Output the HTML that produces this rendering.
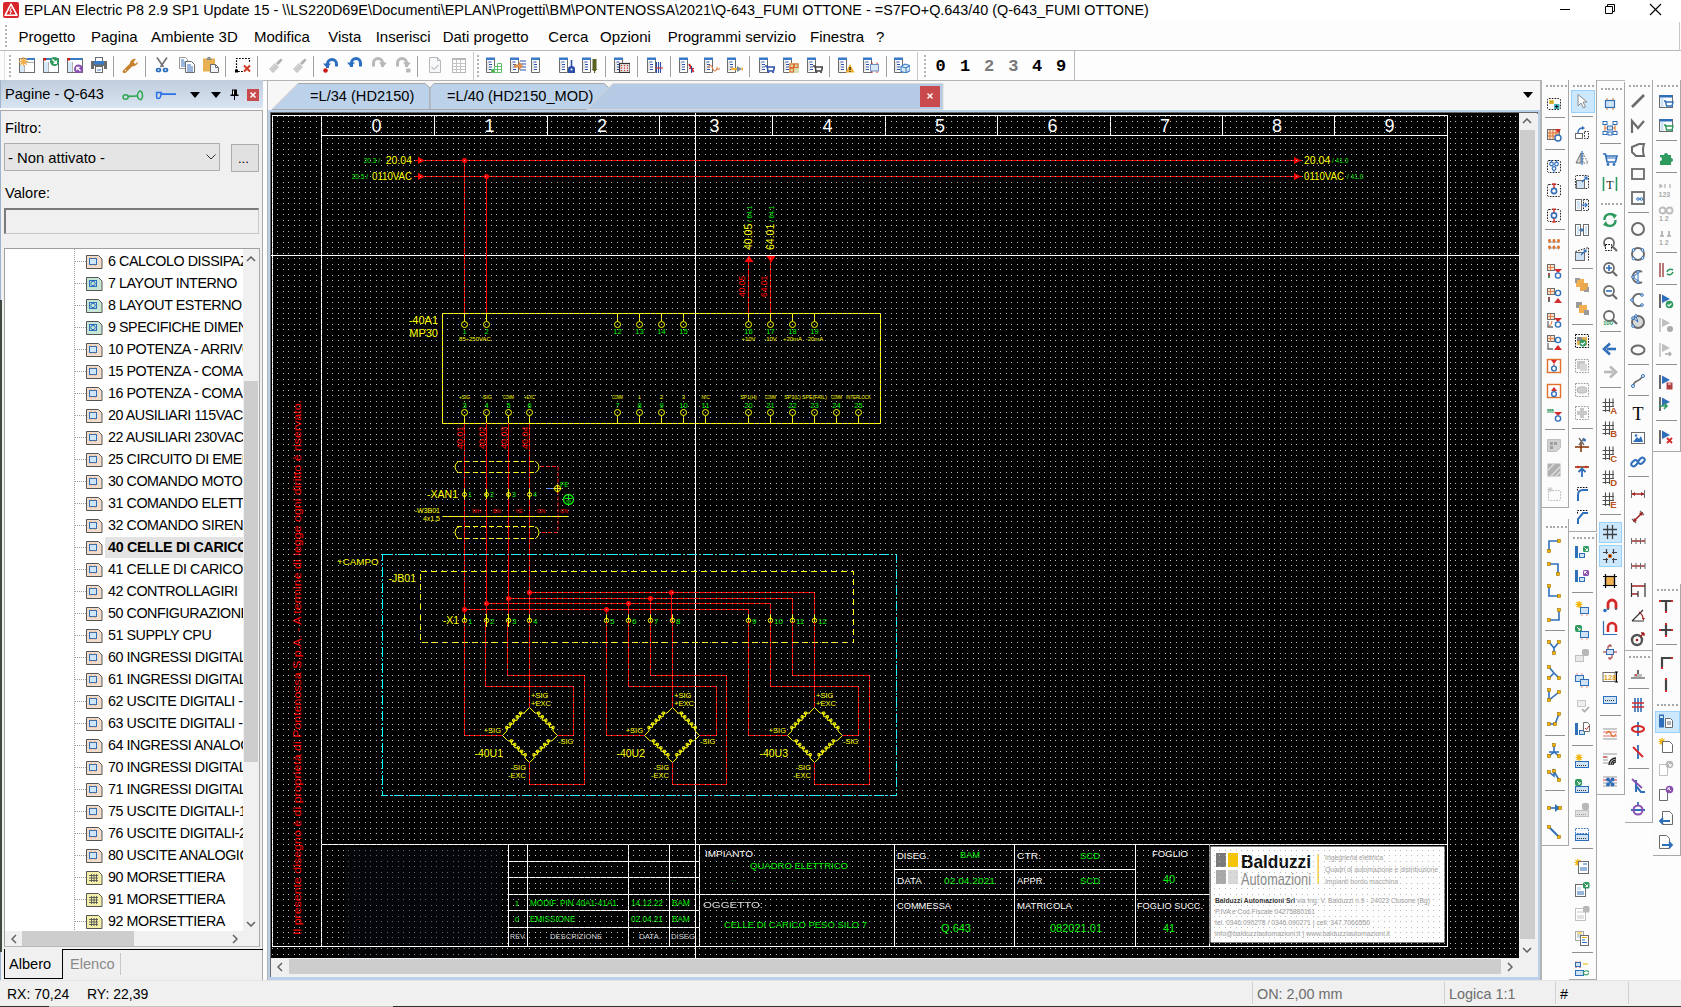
<!DOCTYPE html>
<html><head><meta charset="utf-8">
<style>
*{box-sizing:border-box;margin:0;padding:0}
html,body{width:1681px;height:1007px;overflow:hidden;background:#f0f0f0;font-family:"Liberation Sans",sans-serif;color:#000;position:relative}
.a{position:absolute}
.t{position:absolute;white-space:nowrap;line-height:1}
svg{overflow:hidden}
</style></head><body>
<div class="a" style="left:0;top:0;width:1681px;height:22px;background:#fff"></div>
<svg class="a" style="left:3px;top:2px" width="16" height="16" viewBox="0 0 16 16"><rect x="0" y="0" width="16" height="16" rx="2" fill="#d9262c"/><path d="M8 2.2 L14 13.3 L2 13.3 Z" fill="none" stroke="#fff" stroke-width="1.6" stroke-linejoin="round"/><path d="M8.6 5.5 L6.8 9 L8.6 9 L7.2 12" fill="none" stroke="#fff" stroke-width="1"/></svg>
<div class="t" style="left:24px;top:3px;font-size:14.4px">EPLAN Electric P8 2.9 SP1 Update 15 - \\LS220D69E\Documenti\EPLAN\Progetti\BM\PONTENOSSA\2021\Q-643_FUMI OTTONE - =S7FO+Q.643/40 (Q-643_FUMI OTTONE)</div>
<div class="a" style="left:1560px;top:9px;width:10px;height:1px;background:#000"></div>
<svg class="a" style="left:1604px;top:3px" width="12" height="12" viewBox="0 0 12 12"><path d="M1.5 3.5 H8.5 V10.5 H1.5 Z M3.5 3.5 V1.5 H10.5 V8.5 H8.5" fill="none" stroke="#000" stroke-width="1"/></svg>
<svg class="a" style="left:1649px;top:3px" width="13" height="13" viewBox="0 0 13 13"><path d="M1 1 L12 12 M12 1 L1 12" stroke="#000" stroke-width="1.1"/></svg>
<div class="a" style="left:0;top:22px;width:1681px;height:29px;background:#fdfdfd;border-bottom:1px solid #b9b9b9"></div>
<div class="a" style="left:1679px;top:22px;width:1px;height:29px;background:#c8c8c8"></div>
<div class="a" style="left:5px;top:25px;width:2px;height:2px;background:#b4b4b4"></div><div class="a" style="left:5px;top:29px;width:2px;height:2px;background:#b4b4b4"></div><div class="a" style="left:5px;top:33px;width:2px;height:2px;background:#b4b4b4"></div><div class="a" style="left:5px;top:37px;width:2px;height:2px;background:#b4b4b4"></div><div class="a" style="left:5px;top:41px;width:2px;height:2px;background:#b4b4b4"></div><div class="a" style="left:5px;top:45px;width:2px;height:2px;background:#b4b4b4"></div>
<div class="t" style="left:18.6px;top:29px;font-size:15px">Progetto</div>
<div class="t" style="left:91px;top:29px;font-size:15px">Pagina</div>
<div class="t" style="left:151px;top:29px;font-size:15px">Ambiente 3D</div>
<div class="t" style="left:254px;top:29px;font-size:15px">Modifica</div>
<div class="t" style="left:328.3px;top:29px;font-size:15px">Vista</div>
<div class="t" style="left:375.7px;top:29px;font-size:15px">Inserisci</div>
<div class="t" style="left:442.7px;top:29px;font-size:15px">Dati progetto</div>
<div class="t" style="left:548.3px;top:29px;font-size:15px">Cerca</div>
<div class="t" style="left:600px;top:29px;font-size:15px">Opzioni</div>
<div class="t" style="left:667.7px;top:29px;font-size:15px">Programmi servizio</div>
<div class="t" style="left:810px;top:29px;font-size:15px">Finestra</div>
<div class="t" style="left:876px;top:29px;font-size:15px">?</div>
<div class="a" style="left:0;top:51px;width:1681px;height:30px;background:#fdfdfd;border-bottom:1px solid #b9b9b9"></div>
<div class="a" style="left:4px;top:51px;width:1px;height:29px;background:#e0e0e0"></div>
<div class="a" style="left:9px;top:55px;width:2px;height:2px;background:#b4b4b4"></div><div class="a" style="left:9px;top:59px;width:2px;height:2px;background:#b4b4b4"></div><div class="a" style="left:9px;top:63px;width:2px;height:2px;background:#b4b4b4"></div><div class="a" style="left:9px;top:67px;width:2px;height:2px;background:#b4b4b4"></div><div class="a" style="left:9px;top:71px;width:2px;height:2px;background:#b4b4b4"></div><div class="a" style="left:9px;top:75px;width:2px;height:2px;background:#b4b4b4"></div>
<svg class="a" style="left:19px;top:57px" width="16" height="16" viewBox="0 0 16 16"><rect x="0.5" y="1.5" width="15" height="14" fill="#fff" stroke="#6b6b6b"/><rect x="7" y="1" width="9" height="2" fill="#3a7bc8"/><rect x="1" y="8" width="4" height="7" fill="#d4e8f8"/><path d="M5.5 8V15M5.5 5.5H15" stroke="#9a9a9a" stroke-width=".8"/><path d="M0.00 4.50L9.00 4.50M1.32 1.32L7.68 7.68M4.50 0.00L4.50 9.00M7.68 1.32L1.32 7.68" stroke="#f0b050" stroke-width="1.3"/><circle cx="4.5" cy="4.5" r="1.6" fill="#f0b050"/></svg>
<svg class="a" style="left:43px;top:57px" width="16" height="16" viewBox="0 0 16 16"><rect x="0.5" y="1.5" width="15" height="14" fill="#fff" stroke="#6b6b6b"/><rect x="1" y="1" width="14" height="2" fill="#3a7bc8"/><rect x="0.5" y="1" width="2.5" height="2.5" fill="#e01010"/><rect x="1" y="5" width="4" height="10" fill="#d4e8f8"/><path d="M5.5 5V15" stroke="#9a9a9a" stroke-width=".8"/><circle cx="11.5" cy="4.5" r="4.5" fill="#2e9a5e"/><path d="M9.3 2.3L13 6M13.3 3.5V6.3H10.5" stroke="#fff" stroke-width="1.3" fill="none"/></svg>
<svg class="a" style="left:67px;top:57px" width="16" height="16" viewBox="0 0 16 16"><rect x="0.5" y="1.5" width="15" height="14" fill="#fff" stroke="#6b6b6b"/><rect x="1" y="1" width="14" height="2" fill="#3a7bc8"/><rect x="0.5" y="1" width="2.5" height="2.5" fill="#e01010"/><rect x="1" y="5" width="4" height="10" fill="#d4e8f8"/><path d="M5.5 5V15" stroke="#9a9a9a" stroke-width=".8"/><circle cx="11.5" cy="12" r="4.5" fill="#8a4fb0"/><path d="M13.5 14L10 10.5M9.8 13.2V10.3H12.7" stroke="#fff" stroke-width="1.3" fill="none"/></svg>
<svg class="a" style="left:91px;top:57px" width="16" height="16" viewBox="0 0 16 16"><rect x="4.5" y="0.5" width="7" height="4" fill="#fff" stroke="#6b6b6b"/><path d="M0 4h16v8h-3v-3h-10v3h-3z" fill="#6b6b6b"/><rect x="3" y="4" width="10" height="3.5" fill="#3a7bc8"/><rect x="4.5" y="9.5" width="7" height="6" fill="#fff" stroke="#6b6b6b"/><path d="M6 13h4" stroke="#3a7bc8"/></svg>
<svg class="a" style="left:122px;top:57px" width="16" height="16" viewBox="0 0 16 16"><path d="M2.5 14.5L9.5 7.5" stroke="#c8822e" stroke-width="3.6" stroke-linecap="round"/><path d="M8 8 A5 5 0 0 1 14 2 L11.5 5 L13 7 L16 4.5 A5 5 0 0 1 9.5 9Z" fill="#c8822e"/><circle cx="3.5" cy="13.5" r=".7" fill="#fff"/></svg>
<svg class="a" style="left:154px;top:57px" width="16" height="16" viewBox="0 0 16 16"><path d="M3 0.5L9.5 10M13 0.5L6.5 10" stroke="#707070" stroke-width="1.6"/><ellipse cx="4.5" cy="13" rx="2.8" ry="2.3" fill="#2a6fc0"/><ellipse cx="11.5" cy="13" rx="2.8" ry="2.3" fill="#2a6fc0"/><ellipse cx="4.5" cy="13" rx="1" ry=".8" fill="#fff"/><ellipse cx="11.5" cy="13" rx="1" ry=".8" fill="#fff"/></svg>
<svg class="a" style="left:179px;top:57px" width="16" height="16" viewBox="0 0 16 16"><path d="M0.5 0.5h6l2 2v9h-8z" fill="#fff" stroke="#9a9a9a"/><path d="M2 3h3M2 5h4M2 7h4M2 9h4" stroke="#3a6fb8"/><path d="M6.5 4.5h6l3 3v8h-9z" fill="#fff" stroke="#6b6b6b"/><path d="M8 8h4M8 10h6M8 12h6M8 14h6" stroke="#3a6fb8"/></svg>
<svg class="a" style="left:203px;top:57px" width="16" height="16" viewBox="0 0 16 16"><rect x="0" y="1.5" width="12" height="13" fill="#e8b050"/><path d="M3.5 1.5h5v1.5h-5z" fill="#888"/><rect x="4.5" y="0" width="3" height="1.5" fill="#888"/><path d="M7.5 7.5h5l3 3v5h-8z" fill="#f0f4fa" stroke="#6b6b6b"/><path d="M12.5 7.5v3h3" fill="none" stroke="#6b6b6b"/></svg>
<svg class="a" style="left:235px;top:57px" width="16" height="16" viewBox="0 0 16 16"><path d="M1.5 14V1.5H14.5V6" fill="none" stroke="#000" stroke-width="1.2" stroke-dasharray="1.8 1.2"/><path d="M3 14.5H8" stroke="#000" stroke-width="1.2" stroke-dasharray="1.8 1.2"/><rect x="0" y="12.5" width="3" height="3" fill="#000"/><path d="M9 8.5l6 6M15 8.5l-6 6" stroke="#d03a20" stroke-width="2"/></svg>
<svg class="a" style="left:267px;top:57px" width="16" height="16" viewBox="0 0 16 16"><path d="M2 12L8 6L12 10L6 16Z" fill="#c4c4c4"/><path d="M3 13L9 7M5 14.5L10.5 9" stroke="#e4e4e4" stroke-width=".8"/><path d="M9 6L12 3L14 1.5L15.5 3L14 5L11 8Z" fill="#b0b0b0"/></svg>
<svg class="a" style="left:291px;top:57px" width="16" height="16" viewBox="0 0 16 16"><path d="M2 12L8 6L12 10L6 16Z" fill="#c4c4c4"/><path d="M3 13L9 7M5 14.5L10.5 9" stroke="#e4e4e4" stroke-width=".8"/><path d="M9 6L12 3L14 1.5L15.5 3L14 5L11 8Z" fill="#b0b0b0"/></svg>
<svg class="a" style="left:323px;top:57px" width="16" height="16" viewBox="0 0 16 16"><path d="M4.5 11V7A4.5 4.5 0 0 1 13.5 7V9.5" fill="none" stroke="#2a6fc0" stroke-width="3"/><path d="M0 6.5L8 6.5L4 11Z" fill="#2a6fc0"/><circle cx="2.5" cy="13.5" r="2.3" fill="#c81818"/></svg>
<svg class="a" style="left:347px;top:57px" width="16" height="16" viewBox="0 0 16 16"><path d="M4.5 10V6A4.5 4.5 0 0 1 13.5 6V9.5" fill="none" stroke="#2a6fc0" stroke-width="3"/><path d="M0 5.5L8 5.5L4 10Z" fill="#2a6fc0"/></svg>
<svg class="a" style="left:371px;top:57px" width="16" height="16" viewBox="0 0 16 16"><path d="M11.5 10V6A4.5 4.5 0 0 0 2.5 6V9.5" fill="none" stroke="#b8b8b8" stroke-width="3"/><path d="M16 5.5L8 5.5L12 10Z" fill="#b8b8b8"/></svg>
<svg class="a" style="left:395px;top:57px" width="16" height="16" viewBox="0 0 16 16"><path d="M11.5 10V6A4.5 4.5 0 0 0 2.5 6V9.5" fill="none" stroke="#b8b8b8" stroke-width="3"/><path d="M16 5.5L8 5.5L12 10Z" fill="#b8b8b8"/><rect x="11" y="11.5" width="4.5" height="4" rx="1" fill="#b8b8b8"/></svg>
<svg class="a" style="left:427px;top:57px" width="16" height="16" viewBox="0 0 16 16"><path d="M2.5 0.5h8l3 3v12h-11z" fill="#f6f8fa" stroke="#b8b8b8"/><path d="M10.5 0.5v3h3" fill="none" stroke="#b8b8b8"/><path d="M4.5 10l2.5 2.5 4.5-4.5" stroke="#c0c0c0" stroke-width="1.2" fill="none"/></svg>
<svg class="a" style="left:451px;top:57px" width="16" height="16" viewBox="0 0 16 16"><rect x="1.5" y="1.5" width="13" height="14" fill="#fff" stroke="#b8b8b8"/><rect x="1" y="1" width="14" height="2" fill="#b8b8b8"/><path d="M1.5 6.5h13M1.5 9.5h13M1.5 12.5h13M5.5 3v12M9.5 3v12" stroke="#c4c4c4"/></svg>
<svg class="a" style="left:486px;top:57px" width="16" height="16" viewBox="0 0 16 16"><path d="M0.5 2V15.5H8.5V2" fill="#fff" stroke="#6b6b6b"/><rect x="0" y="0.5" width="9" height="2.5" fill="#3a7bc8"/><path d="M2 4.5V14" stroke="#b0b0b0" stroke-width=".7"/><path d="M2.5 5h3M3 7.5h3M3 10h3M3 12.5h3" stroke="#2a4fa8" stroke-width="1"/><path d="M5.5 15.5V12.5H8.5V9.5H11.5V6.5H15.5V15.5Z" fill="#fff" stroke="#60c070"/><path d="M8.5 12.5H15.5M11.5 9.5H15.5M11.5 9.5V15.5M8.5 12.5V15.5" stroke="#60c070"/><rect x="6" y="13" width="2" height="2" fill="#50b050"/></svg>
<svg class="a" style="left:510px;top:57px" width="16" height="16" viewBox="0 0 16 16"><path d="M0.5 2V15.5H8.5V2" fill="#fff" stroke="#6b6b6b"/><rect x="0" y="0.5" width="9" height="2.5" fill="#3a7bc8"/><path d="M2 4.5V14" stroke="#b0b0b0" stroke-width=".7"/><path d="M2.5 5h3M3 7.5h3M3 10h3M3 12.5h3" stroke="#2a4fa8" stroke-width="1"/><path d="M10 4h6M10 7h6M10 10h6M10 13h6" stroke="#2a4fa8" stroke-width="1.1"/><path d="M4 7.5h5v-3l4 4.5-4 4.5v-3h-5z" fill="#e0904a"/></svg>
<svg class="a" style="left:531px;top:57px" width="16" height="16" viewBox="0 0 16 16"><path d="M0.5 2V15.5H8.5V2" fill="#fff" stroke="#6b6b6b"/><rect x="0" y="0.5" width="9" height="2.5" fill="#3a7bc8"/><path d="M2 4.5V14" stroke="#b0b0b0" stroke-width=".7"/><path d="M2.5 5h3M3 7.5h3M3 10h3M3 12.5h3" stroke="#2a4fa8" stroke-width="1"/></svg>
<svg class="a" style="left:559px;top:57px" width="16" height="16" viewBox="0 0 16 16"><path d="M0.5 2V15.5H8.5V2" fill="#fff" stroke="#6b6b6b"/><rect x="0" y="0.5" width="9" height="2.5" fill="#3a7bc8"/><path d="M2 4.5V14" stroke="#b0b0b0" stroke-width=".7"/><path d="M2.5 5h3M3 7.5h3M3 10h3M3 12.5h3" stroke="#2a4fa8" stroke-width="1"/><path d="M12.5 3V10" stroke="#2a4fa8" stroke-width="1.6"/><path d="M9 16V11.5Q9 9 12.5 9Q16 9 16 11.5V16Z" fill="#2a4fa8"/><circle cx="12.5" cy="12.5" r="1" fill="#fff"/></svg>
<svg class="a" style="left:582px;top:57px" width="16" height="16" viewBox="0 0 16 16"><path d="M0.5 2V15.5H8.5V2" fill="#fff" stroke="#6b6b6b"/><rect x="0" y="0.5" width="9" height="2.5" fill="#3a7bc8"/><path d="M2 4.5V14" stroke="#b0b0b0" stroke-width=".7"/><path d="M2.5 5h3M3 7.5h3M3 10h3M3 12.5h3" stroke="#2a4fa8" stroke-width="1"/><rect x="10.5" y="2" width="4" height="10" fill="#5a6020"/><path d="M9.5 12h6l-2 2h-2z" fill="#5a6020"/><rect x="12" y="13" width="1.2" height="3" fill="#5a6020"/></svg>
<svg class="a" style="left:614px;top:57px" width="16" height="16" viewBox="0 0 16 16"><path d="M0.5 2V15.5H8.5V2" fill="#fff" stroke="#6b6b6b"/><rect x="0" y="0.5" width="9" height="2.5" fill="#3a7bc8"/><path d="M2 4.5V14" stroke="#b0b0b0" stroke-width=".7"/><path d="M2.5 5h3M3 7.5h3M3 10h3M3 12.5h3" stroke="#2a4fa8" stroke-width="1"/><rect x="5.5" y="6.5" width="10.5" height="9" fill="#e8e8e8" stroke="#333" stroke-width="1.2"/><path d="M7.5 8v6M10.5 8v6M13.5 8v6" stroke="#d03030" stroke-width="1.2" stroke-dasharray="1.2 1.3"/></svg>
<svg class="a" style="left:647px;top:57px" width="16" height="16" viewBox="0 0 16 16"><path d="M0.5 2V15.5H8.5V2" fill="#fff" stroke="#6b6b6b"/><rect x="0" y="0.5" width="9" height="2.5" fill="#3a7bc8"/><path d="M2 4.5V14" stroke="#b0b0b0" stroke-width=".7"/><path d="M2.5 5h3M3 7.5h3M3 10h3M3 12.5h3" stroke="#2a4fa8" stroke-width="1"/><path d="M9.5 5V16M11.5 5V16M13.5 5V16" stroke="#2a4fa8" stroke-width="1.1"/><path d="M8 11H16" stroke="#d03030" stroke-width="1.1"/></svg>
<svg class="a" style="left:679px;top:57px" width="16" height="16" viewBox="0 0 16 16"><path d="M0.5 2V15.5H8.5V2" fill="#fff" stroke="#6b6b6b"/><rect x="0" y="0.5" width="9" height="2.5" fill="#3a7bc8"/><path d="M2 4.5V14" stroke="#b0b0b0" stroke-width=".7"/><path d="M2.5 5h3M3 7.5h3M3 10h3M3 12.5h3" stroke="#2a4fa8" stroke-width="1"/><path d="M10 7L14.5 15" stroke="#d02020" stroke-width="1.8"/><path d="M10 11.5h5" stroke="#d02020" stroke-width="1"/><path d="M12.5 9V16" stroke="#2a4fa8"/></svg>
<svg class="a" style="left:704px;top:57px" width="16" height="16" viewBox="0 0 16 16"><path d="M0.5 2V15.5H8.5V2" fill="#fff" stroke="#6b6b6b"/><rect x="0" y="0.5" width="9" height="2.5" fill="#3a7bc8"/><path d="M2 4.5V14" stroke="#b0b0b0" stroke-width=".7"/><path d="M2.5 5h3M3 7.5h3M3 10h3M3 12.5h3" stroke="#2a4fa8" stroke-width="1"/><path d="M4 11Q6 5 8.5 11T13 11Q14 14 16 11" fill="none" stroke="#e08a50" stroke-width="1.1"/></svg>
<svg class="a" style="left:727px;top:57px" width="16" height="16" viewBox="0 0 16 16"><path d="M0.5 2V15.5H8.5V2" fill="#fff" stroke="#6b6b6b"/><rect x="0" y="0.5" width="9" height="2.5" fill="#3a7bc8"/><path d="M2 4.5V14" stroke="#b0b0b0" stroke-width=".7"/><path d="M2.5 5h3M3 7.5h3M3 10h3M3 12.5h3" stroke="#2a4fa8" stroke-width="1"/><path d="M4 12h6" stroke="#f0b030" stroke-width="2.2"/><path d="M10 9l5 3-5 3z" fill="#7a8a9a"/><rect x="14.5" y="10.5" width="1.5" height="3" fill="#f0b030"/></svg>
<svg class="a" style="left:759px;top:57px" width="16" height="16" viewBox="0 0 16 16"><path d="M0.5 2V15.5H8.5V2" fill="#fff" stroke="#6b6b6b"/><rect x="0" y="0.5" width="9" height="2.5" fill="#3a7bc8"/><path d="M2 4.5V14" stroke="#b0b0b0" stroke-width=".7"/><path d="M2.5 5h3M3 7.5h3M3 10h3M3 12.5h3" stroke="#2a4fa8" stroke-width="1"/><path d="M6 9H8L9 14H14.5L15.5 10H8.5" fill="none" stroke="#2a4fa8" stroke-width="1.5"/><circle cx="9.5" cy="15.5" r=".9" fill="#2a4fa8"/><circle cx="14" cy="15.5" r=".9" fill="#2a4fa8"/></svg>
<svg class="a" style="left:783px;top:57px" width="16" height="16" viewBox="0 0 16 16"><path d="M0.5 2V15.5H8.5V2" fill="#fff" stroke="#6b6b6b"/><rect x="0" y="0.5" width="9" height="2.5" fill="#3a7bc8"/><path d="M2 4.5V14" stroke="#b0b0b0" stroke-width=".7"/><path d="M2.5 5h3M3 7.5h3M3 10h3M3 12.5h3" stroke="#2a4fa8" stroke-width="1"/><rect x="6" y="6" width="10" height="10" fill="#d8e0b8"/><rect x="7" y="7" width="3.5" height="3.5" fill="none" stroke="#e07030" stroke-width="1.2"/><rect x="11.5" y="7" width="3.5" height="3.5" fill="none" stroke="#e07030" stroke-width="1.2"/><rect x="7" y="11.5" width="3.5" height="3.5" fill="none" stroke="#e07030" stroke-width="1.2"/></svg>
<svg class="a" style="left:807px;top:57px" width="16" height="16" viewBox="0 0 16 16"><path d="M0.5 2V15.5H8.5V2" fill="#fff" stroke="#6b6b6b"/><rect x="0" y="0.5" width="9" height="2.5" fill="#3a7bc8"/><path d="M2 4.5V14" stroke="#b0b0b0" stroke-width=".7"/><path d="M2.5 5h3M3 7.5h3M3 10h3M3 12.5h3" stroke="#2a4fa8" stroke-width="1"/><path d="M6 9H8L9 14H14.5L15.5 10H8.5" fill="none" stroke="#404040" stroke-width="1.5"/><circle cx="9.5" cy="15.5" r=".9" fill="#404040"/><circle cx="14" cy="15.5" r=".9" fill="#404040"/></svg>
<svg class="a" style="left:838px;top:57px" width="16" height="16" viewBox="0 0 16 16"><path d="M0.5 2V15.5H8.5V2" fill="#fff" stroke="#6b6b6b"/><rect x="0" y="0.5" width="9" height="2.5" fill="#3a7bc8"/><path d="M2 4.5V14" stroke="#b0b0b0" stroke-width=".7"/><path d="M2.5 5h3M3 7.5h3M3 10h3M3 12.5h3" stroke="#2a4fa8" stroke-width="1"/><path d="M12 7L16.5 15.5H7.5Z" fill="#f0b030"/><path d="M12 10v3M12 14v1" stroke="#000" stroke-width="1.1"/></svg>
<svg class="a" style="left:863px;top:57px" width="16" height="16" viewBox="0 0 16 16"><path d="M0.5 2V15.5H8.5V2" fill="#fff" stroke="#6b6b6b"/><rect x="0" y="0.5" width="9" height="2.5" fill="#3a7bc8"/><path d="M2 4.5V14" stroke="#b0b0b0" stroke-width=".7"/><path d="M2.5 5h3M3 7.5h3M3 10h3M3 12.5h3" stroke="#2a4fa8" stroke-width="1"/><rect x="7.5" y="7.5" width="8" height="6.5" fill="#d8e8f8" stroke="#7090c0"/><path d="M9 5.5v1.5M14 5.5v1.5M9 14.5v1.5M14 14.5v1.5" stroke="#d02020"/></svg>
<svg class="a" style="left:894px;top:57px" width="16" height="16" viewBox="0 0 16 16"><path d="M0.5 2V15.5H8.5V2" fill="#fff" stroke="#6b6b6b"/><rect x="0" y="0.5" width="9" height="2.5" fill="#3a7bc8"/><path d="M2 4.5V14" stroke="#b0b0b0" stroke-width=".7"/><path d="M2.5 5h3M3 7.5h3M3 10h3M3 12.5h3" stroke="#2a4fa8" stroke-width="1"/><path d="M7 9.5l4-2.5 5 1.5v5l-4 2.5-5-1.5z" fill="#dceaf8" stroke="#3a7bc8" stroke-width="1.1"/><path d="M7 9.5l5 1.5 4-2.5M12 11v5" stroke="#3a7bc8" fill="none" stroke-width="1.1"/></svg>
<div class="a" style="left:113px;top:56px;width:1px;height:21px;background:#a0a0a0"></div>
<div class="a" style="left:145px;top:56px;width:1px;height:21px;background:#a0a0a0"></div>
<div class="a" style="left:225px;top:56px;width:1px;height:21px;background:#a0a0a0"></div>
<div class="a" style="left:257px;top:56px;width:1px;height:21px;background:#a0a0a0"></div>
<div class="a" style="left:313px;top:56px;width:1px;height:21px;background:#a0a0a0"></div>
<div class="a" style="left:417px;top:56px;width:1px;height:21px;background:#a0a0a0"></div>
<div class="a" style="left:605px;top:56px;width:1px;height:21px;background:#a0a0a0"></div>
<div class="a" style="left:637px;top:56px;width:1px;height:21px;background:#a0a0a0"></div>
<div class="a" style="left:670px;top:56px;width:1px;height:21px;background:#a0a0a0"></div>
<div class="a" style="left:749px;top:56px;width:1px;height:21px;background:#a0a0a0"></div>
<div class="a" style="left:829px;top:56px;width:1px;height:21px;background:#a0a0a0"></div>
<div class="a" style="left:886px;top:56px;width:1px;height:21px;background:#a0a0a0"></div>
<div class="a" style="left:473px;top:52px;width:1px;height:28px;background:#c8c8c8"></div>
<div class="a" style="left:477px;top:55px;width:2px;height:2px;background:#b4b4b4"></div><div class="a" style="left:477px;top:59px;width:2px;height:2px;background:#b4b4b4"></div><div class="a" style="left:477px;top:63px;width:2px;height:2px;background:#b4b4b4"></div><div class="a" style="left:477px;top:67px;width:2px;height:2px;background:#b4b4b4"></div><div class="a" style="left:477px;top:71px;width:2px;height:2px;background:#b4b4b4"></div><div class="a" style="left:477px;top:75px;width:2px;height:2px;background:#b4b4b4"></div>
<div class="a" style="left:917px;top:52px;width:1px;height:28px;background:#c8c8c8"></div>
<div class="a" style="left:924px;top:55px;width:2px;height:2px;background:#b4b4b4"></div><div class="a" style="left:924px;top:59px;width:2px;height:2px;background:#b4b4b4"></div><div class="a" style="left:924px;top:63px;width:2px;height:2px;background:#b4b4b4"></div><div class="a" style="left:924px;top:67px;width:2px;height:2px;background:#b4b4b4"></div><div class="a" style="left:924px;top:71px;width:2px;height:2px;background:#b4b4b4"></div><div class="a" style="left:924px;top:75px;width:2px;height:2px;background:#b4b4b4"></div>
<div class="t" style="left:934.6px;top:58px;font-size:17px;font-family:Liberation Mono,monospace;font-weight:bold;color:#000;width:12px;text-align:center">0</div>
<div class="t" style="left:959px;top:58px;font-size:17px;font-family:Liberation Mono,monospace;font-weight:bold;color:#000;width:12px;text-align:center">1</div>
<div class="t" style="left:983px;top:58px;font-size:17px;font-family:Liberation Mono,monospace;font-weight:bold;color:#7a7a7a;width:12px;text-align:center">2</div>
<div class="t" style="left:1007.3px;top:58px;font-size:17px;font-family:Liberation Mono,monospace;font-weight:bold;color:#7a7a7a;width:12px;text-align:center">3</div>
<div class="t" style="left:1031px;top:58px;font-size:17px;font-family:Liberation Mono,monospace;font-weight:bold;color:#000;width:12px;text-align:center">4</div>
<div class="t" style="left:1055px;top:58px;font-size:17px;font-family:Liberation Mono,monospace;font-weight:bold;color:#000;width:12px;text-align:center">9</div>
<div class="a" style="left:1074px;top:51px;width:1px;height:30px;background:#b9b9b9"></div>
<div class="a" style="left:0;top:81px;width:263px;height:899px;background:#f0f0f0"></div>
<div class="a" style="left:0;top:81px;width:1px;height:899px;background:#9fb4cc"></div>
<div class="a" style="left:0;top:300px;width:2px;height:652px;background:#404840"></div>
<div class="a" style="left:1px;top:80px;width:262px;height:28px;background:linear-gradient(#c0cddc,#d8e4f1)"></div>
<div class="a" style="left:0;top:108px;width:263px;height:2px;background:#fafafa"></div>
<div class="a" style="left:0;top:110px;width:263px;height:1px;background:#a8a8a8"></div>
<div class="a" style="left:262px;top:110px;width:1px;height:870px;background:#a8a8a8"></div>
<div class="t" style="left:5px;top:87px;font-size:14.6px">Pagine - Q-643</div>
<svg class="a" style="left:120px;top:88px" width="26" height="14" viewBox="0 0 26 14"><ellipse cx="5.6" cy="9" rx="2.6" ry="2.3" fill="none" stroke="#30a850" stroke-width="1.5"/><path d="M8 8.4L17.5 8" stroke="#30a850" stroke-width="1.6"/><path d="M17.3 8 Q18 3 20.5 3 Q22.8 4 22.5 9 Q21.5 12 20 11.6 Q18 11 17.3 8Z" fill="none" stroke="#30a850" stroke-width="1.5"/></svg>
<svg class="a" style="left:154px;top:88px" width="24" height="14" viewBox="0 0 24 14"><path d="M2.6 4.6H7.2L6.5 8.8Q5.8 10.6 4.2 10.6Q2.6 10.6 2.6 8.8Z" fill="none" stroke="#2a6fe8" stroke-width="1.5"/><path d="M7.5 6.2H21.3" stroke="#2a6fe8" stroke-width="1.8" stroke-linecap="round"/></svg>
<svg class="a" style="left:190px;top:92px" width="10" height="6" viewBox="0 0 10 6"><path d="M0 0h10L5 6z" fill="#000"/></svg>
<svg class="a" style="left:211px;top:92px" width="10" height="6" viewBox="0 0 10 6"><path d="M0 0h10L5 6z" fill="#000"/></svg>
<svg class="a" style="left:230px;top:89px" width="9" height="11" viewBox="0 0 9 11"><path d="M2 0.5h5v5h1.5v1.5h-8v-1.5h1.5z" fill="#000"/><rect x="3" y="1.5" width="1" height="4" fill="#fff"/><rect x="4" y="7" width="1" height="4" fill="#000"/></svg>
<div class="a" style="left:247px;top:89px;width:12px;height:12px;background:#c84a4d"></div>
<svg class="a" style="left:249px;top:91px" width="8" height="8" viewBox="0 0 8 8"><path d="M1.5 1.5l5 5M6.5 1.5l-5 5" stroke="#fff" stroke-width="1.5"/></svg>
<div class="t" style="left:5px;top:121px;font-size:14.6px">Filtro:</div>
<div class="a" style="left:4px;top:143px;width:216px;height:28px;background:#e5e5e5;border:1px solid #adadad"></div>
<div class="t" style="left:8px;top:151px;font-size:14.8px">- Non attivato -</div>
<svg class="a" style="left:206px;top:154px" width="10" height="6" viewBox="0 0 10 6"><path d="M0.5 0.5L5 5L9.5 0.5" fill="none" stroke="#333" stroke-width="1"/></svg>
<div class="a" style="left:231px;top:144px;width:28px;height:28px;background:#e1e1e1;border:1px solid #adadad"></div>
<div class="t" style="left:238px;top:152px;font-size:13px">...</div>
<div class="t" style="left:5px;top:186px;font-size:14.6px">Valore:</div>
<div class="a" style="left:4px;top:208px;width:255px;height:26px;background:#f0f0f0;border:2px solid #7a7a7a;border-right:1px solid #c8c8c8;border-bottom:1px solid #c8c8c8"></div>
<div class="a" style="left:4px;top:248px;width:256px;height:699px;background:#fff;border:1px solid #a0a0a0;border-right:2px solid #a8a8a8;border-bottom:2px solid #b8b8b8"></div>
<div class="a" style="left:5px;top:249px;width:238px;height:682px;overflow:hidden">
<div class="a" style="left:69px;top:0;width:1px;height:682px;background:repeating-linear-gradient(#a0a0a0 0 1px,transparent 1px 2px)"></div>
<div class="a" style="left:70px;top:12px;width:11px;height:1px;background:repeating-linear-gradient(90deg,#a0a0a0 0 1px,transparent 1px 2px)"></div>
<svg class="a" style="left:81px;top:6px" width="17" height="14" viewBox="0 0 17 14"><path d="M0.5 0.5h12l3.5 3.5v9.5h-15.5z" fill="#f2dccb" stroke="#555"/><rect x="3.5" y="3.5" width="7" height="6" fill="#cfe6f8" stroke="#2a6fc0"/><path d="M5 2.5v1M9 2.5v1M5 9.5v1M9 9.5v1" stroke="#e07020"/></svg>
<div class="t" style="left:103px;top:5px;font-size:14.3px;letter-spacing:-0.45px">6 CALCOLO DISSIPAZIONE</div>
<div class="a" style="left:70px;top:34px;width:11px;height:1px;background:repeating-linear-gradient(90deg,#a0a0a0 0 1px,transparent 1px 2px)"></div>
<svg class="a" style="left:81px;top:28px" width="17" height="14" viewBox="0 0 17 14"><path d="M0.5 0.5h12l3.5 3.5v9.5h-15.5z" fill="#c8e6d4" stroke="#555"/><rect x="3.5" y="3.5" width="7" height="6" fill="none" stroke="#2a6fc0"/><circle cx="7" cy="6.5" r="2.2" fill="none" stroke="#2a6fc0"/></svg>
<div class="t" style="left:103px;top:27px;font-size:14.3px;letter-spacing:-0.45px">7 LAYOUT INTERNO</div>
<div class="a" style="left:70px;top:56px;width:11px;height:1px;background:repeating-linear-gradient(90deg,#a0a0a0 0 1px,transparent 1px 2px)"></div>
<svg class="a" style="left:81px;top:50px" width="17" height="14" viewBox="0 0 17 14"><path d="M0.5 0.5h12l3.5 3.5v9.5h-15.5z" fill="#c8e6d4" stroke="#555"/><rect x="3.5" y="3.5" width="7" height="6" fill="none" stroke="#2a6fc0"/><circle cx="7" cy="6.5" r="2.2" fill="none" stroke="#2a6fc0"/></svg>
<div class="t" style="left:103px;top:49px;font-size:14.3px;letter-spacing:-0.45px">8 LAYOUT ESTERNO</div>
<div class="a" style="left:70px;top:78px;width:11px;height:1px;background:repeating-linear-gradient(90deg,#a0a0a0 0 1px,transparent 1px 2px)"></div>
<svg class="a" style="left:81px;top:72px" width="17" height="14" viewBox="0 0 17 14"><path d="M0.5 0.5h12l3.5 3.5v9.5h-15.5z" fill="#c8e6d4" stroke="#555"/><rect x="3.5" y="3.5" width="7" height="6" fill="none" stroke="#2a6fc0"/><circle cx="7" cy="6.5" r="2.2" fill="none" stroke="#2a6fc0"/></svg>
<div class="t" style="left:103px;top:71px;font-size:14.3px;letter-spacing:-0.45px">9 SPECIFICHE DIMENSIONI</div>
<div class="a" style="left:70px;top:100px;width:11px;height:1px;background:repeating-linear-gradient(90deg,#a0a0a0 0 1px,transparent 1px 2px)"></div>
<svg class="a" style="left:81px;top:94px" width="17" height="14" viewBox="0 0 17 14"><path d="M0.5 0.5h12l3.5 3.5v9.5h-15.5z" fill="#f2dccb" stroke="#555"/><rect x="3.5" y="3.5" width="7" height="6" fill="#cfe6f8" stroke="#2a6fc0"/><path d="M5 2.5v1M9 2.5v1M5 9.5v1M9 9.5v1" stroke="#e07020"/></svg>
<div class="t" style="left:103px;top:93px;font-size:14.3px;letter-spacing:-0.45px">10 POTENZA - ARRIVO</div>
<div class="a" style="left:70px;top:122px;width:11px;height:1px;background:repeating-linear-gradient(90deg,#a0a0a0 0 1px,transparent 1px 2px)"></div>
<svg class="a" style="left:81px;top:116px" width="17" height="14" viewBox="0 0 17 14"><path d="M0.5 0.5h12l3.5 3.5v9.5h-15.5z" fill="#f2dccb" stroke="#555"/><rect x="3.5" y="3.5" width="7" height="6" fill="#cfe6f8" stroke="#2a6fc0"/><path d="M5 2.5v1M9 2.5v1M5 9.5v1M9 9.5v1" stroke="#e07020"/></svg>
<div class="t" style="left:103px;top:115px;font-size:14.3px;letter-spacing:-0.45px">15 POTENZA - COMANDI</div>
<div class="a" style="left:70px;top:144px;width:11px;height:1px;background:repeating-linear-gradient(90deg,#a0a0a0 0 1px,transparent 1px 2px)"></div>
<svg class="a" style="left:81px;top:138px" width="17" height="14" viewBox="0 0 17 14"><path d="M0.5 0.5h12l3.5 3.5v9.5h-15.5z" fill="#f2dccb" stroke="#555"/><rect x="3.5" y="3.5" width="7" height="6" fill="#cfe6f8" stroke="#2a6fc0"/><path d="M5 2.5v1M9 2.5v1M5 9.5v1M9 9.5v1" stroke="#e07020"/></svg>
<div class="t" style="left:103px;top:137px;font-size:14.3px;letter-spacing:-0.45px">16 POTENZA - COMANDI</div>
<div class="a" style="left:70px;top:166px;width:11px;height:1px;background:repeating-linear-gradient(90deg,#a0a0a0 0 1px,transparent 1px 2px)"></div>
<svg class="a" style="left:81px;top:160px" width="17" height="14" viewBox="0 0 17 14"><path d="M0.5 0.5h12l3.5 3.5v9.5h-15.5z" fill="#f2dccb" stroke="#555"/><rect x="3.5" y="3.5" width="7" height="6" fill="#cfe6f8" stroke="#2a6fc0"/><path d="M5 2.5v1M9 2.5v1M5 9.5v1M9 9.5v1" stroke="#e07020"/></svg>
<div class="t" style="left:103px;top:159px;font-size:14.3px;letter-spacing:-0.45px">20 AUSILIARI 115VAC</div>
<div class="a" style="left:70px;top:188px;width:11px;height:1px;background:repeating-linear-gradient(90deg,#a0a0a0 0 1px,transparent 1px 2px)"></div>
<svg class="a" style="left:81px;top:182px" width="17" height="14" viewBox="0 0 17 14"><path d="M0.5 0.5h12l3.5 3.5v9.5h-15.5z" fill="#f2dccb" stroke="#555"/><rect x="3.5" y="3.5" width="7" height="6" fill="#cfe6f8" stroke="#2a6fc0"/><path d="M5 2.5v1M9 2.5v1M5 9.5v1M9 9.5v1" stroke="#e07020"/></svg>
<div class="t" style="left:103px;top:181px;font-size:14.3px;letter-spacing:-0.45px">22 AUSILIARI 230VAC</div>
<div class="a" style="left:70px;top:210px;width:11px;height:1px;background:repeating-linear-gradient(90deg,#a0a0a0 0 1px,transparent 1px 2px)"></div>
<svg class="a" style="left:81px;top:204px" width="17" height="14" viewBox="0 0 17 14"><path d="M0.5 0.5h12l3.5 3.5v9.5h-15.5z" fill="#f2dccb" stroke="#555"/><rect x="3.5" y="3.5" width="7" height="6" fill="#cfe6f8" stroke="#2a6fc0"/><path d="M5 2.5v1M9 2.5v1M5 9.5v1M9 9.5v1" stroke="#e07020"/></svg>
<div class="t" style="left:103px;top:203px;font-size:14.3px;letter-spacing:-0.45px">25 CIRCUITO DI EMERGENZA</div>
<div class="a" style="left:70px;top:232px;width:11px;height:1px;background:repeating-linear-gradient(90deg,#a0a0a0 0 1px,transparent 1px 2px)"></div>
<svg class="a" style="left:81px;top:226px" width="17" height="14" viewBox="0 0 17 14"><path d="M0.5 0.5h12l3.5 3.5v9.5h-15.5z" fill="#f2dccb" stroke="#555"/><rect x="3.5" y="3.5" width="7" height="6" fill="#cfe6f8" stroke="#2a6fc0"/><path d="M5 2.5v1M9 2.5v1M5 9.5v1M9 9.5v1" stroke="#e07020"/></svg>
<div class="t" style="left:103px;top:225px;font-size:14.3px;letter-spacing:-0.45px">30 COMANDO MOTORI</div>
<div class="a" style="left:70px;top:254px;width:11px;height:1px;background:repeating-linear-gradient(90deg,#a0a0a0 0 1px,transparent 1px 2px)"></div>
<svg class="a" style="left:81px;top:248px" width="17" height="14" viewBox="0 0 17 14"><path d="M0.5 0.5h12l3.5 3.5v9.5h-15.5z" fill="#f2dccb" stroke="#555"/><rect x="3.5" y="3.5" width="7" height="6" fill="#cfe6f8" stroke="#2a6fc0"/><path d="M5 2.5v1M9 2.5v1M5 9.5v1M9 9.5v1" stroke="#e07020"/></svg>
<div class="t" style="left:103px;top:247px;font-size:14.3px;letter-spacing:-0.45px">31 COMANDO ELETTROVALVOLE</div>
<div class="a" style="left:70px;top:276px;width:11px;height:1px;background:repeating-linear-gradient(90deg,#a0a0a0 0 1px,transparent 1px 2px)"></div>
<svg class="a" style="left:81px;top:270px" width="17" height="14" viewBox="0 0 17 14"><path d="M0.5 0.5h12l3.5 3.5v9.5h-15.5z" fill="#f2dccb" stroke="#555"/><rect x="3.5" y="3.5" width="7" height="6" fill="#cfe6f8" stroke="#2a6fc0"/><path d="M5 2.5v1M9 2.5v1M5 9.5v1M9 9.5v1" stroke="#e07020"/></svg>
<div class="t" style="left:103px;top:269px;font-size:14.3px;letter-spacing:-0.45px">32 COMANDO SIRENA</div>
<div class="a" style="left:70px;top:298px;width:11px;height:1px;background:repeating-linear-gradient(90deg,#a0a0a0 0 1px,transparent 1px 2px)"></div>
<svg class="a" style="left:81px;top:292px" width="17" height="14" viewBox="0 0 17 14"><path d="M0.5 0.5h12l3.5 3.5v9.5h-15.5z" fill="#f2dccb" stroke="#555"/><rect x="3.5" y="3.5" width="7" height="6" fill="#cfe6f8" stroke="#2a6fc0"/><path d="M5 2.5v1M9 2.5v1M5 9.5v1M9 9.5v1" stroke="#e07020"/></svg>
<div class="a" style="left:100px;top:288px;width:138px;height:21px;background:#e3e3e3"></div>
<div class="t" style="left:103px;top:291px;font-size:14.3px;font-weight:bold;letter-spacing:-0.3px">40 CELLE DI CARICO</div>
<div class="a" style="left:70px;top:320px;width:11px;height:1px;background:repeating-linear-gradient(90deg,#a0a0a0 0 1px,transparent 1px 2px)"></div>
<svg class="a" style="left:81px;top:314px" width="17" height="14" viewBox="0 0 17 14"><path d="M0.5 0.5h12l3.5 3.5v9.5h-15.5z" fill="#f2dccb" stroke="#555"/><rect x="3.5" y="3.5" width="7" height="6" fill="#cfe6f8" stroke="#2a6fc0"/><path d="M5 2.5v1M9 2.5v1M5 9.5v1M9 9.5v1" stroke="#e07020"/></svg>
<div class="t" style="left:103px;top:313px;font-size:14.3px;letter-spacing:-0.45px">41 CELLE DI CARICO</div>
<div class="a" style="left:70px;top:342px;width:11px;height:1px;background:repeating-linear-gradient(90deg,#a0a0a0 0 1px,transparent 1px 2px)"></div>
<svg class="a" style="left:81px;top:336px" width="17" height="14" viewBox="0 0 17 14"><path d="M0.5 0.5h12l3.5 3.5v9.5h-15.5z" fill="#f2dccb" stroke="#555"/><rect x="3.5" y="3.5" width="7" height="6" fill="#cfe6f8" stroke="#2a6fc0"/><path d="M5 2.5v1M9 2.5v1M5 9.5v1M9 9.5v1" stroke="#e07020"/></svg>
<div class="t" style="left:103px;top:335px;font-size:14.3px;letter-spacing:-0.45px">42 CONTROLLAGIRI</div>
<div class="a" style="left:70px;top:364px;width:11px;height:1px;background:repeating-linear-gradient(90deg,#a0a0a0 0 1px,transparent 1px 2px)"></div>
<svg class="a" style="left:81px;top:358px" width="17" height="14" viewBox="0 0 17 14"><path d="M0.5 0.5h12l3.5 3.5v9.5h-15.5z" fill="#f2dccb" stroke="#555"/><rect x="3.5" y="3.5" width="7" height="6" fill="#cfe6f8" stroke="#2a6fc0"/><path d="M5 2.5v1M9 2.5v1M5 9.5v1M9 9.5v1" stroke="#e07020"/></svg>
<div class="t" style="left:103px;top:357px;font-size:14.3px;letter-spacing:-0.45px">50 CONFIGURAZIONE</div>
<div class="a" style="left:70px;top:386px;width:11px;height:1px;background:repeating-linear-gradient(90deg,#a0a0a0 0 1px,transparent 1px 2px)"></div>
<svg class="a" style="left:81px;top:380px" width="17" height="14" viewBox="0 0 17 14"><path d="M0.5 0.5h12l3.5 3.5v9.5h-15.5z" fill="#f2dccb" stroke="#555"/><rect x="3.5" y="3.5" width="7" height="6" fill="#cfe6f8" stroke="#2a6fc0"/><path d="M5 2.5v1M9 2.5v1M5 9.5v1M9 9.5v1" stroke="#e07020"/></svg>
<div class="t" style="left:103px;top:379px;font-size:14.3px;letter-spacing:-0.45px">51 SUPPLY CPU</div>
<div class="a" style="left:70px;top:408px;width:11px;height:1px;background:repeating-linear-gradient(90deg,#a0a0a0 0 1px,transparent 1px 2px)"></div>
<svg class="a" style="left:81px;top:402px" width="17" height="14" viewBox="0 0 17 14"><path d="M0.5 0.5h12l3.5 3.5v9.5h-15.5z" fill="#f2dccb" stroke="#555"/><rect x="3.5" y="3.5" width="7" height="6" fill="#cfe6f8" stroke="#2a6fc0"/><path d="M5 2.5v1M9 2.5v1M5 9.5v1M9 9.5v1" stroke="#e07020"/></svg>
<div class="t" style="left:103px;top:401px;font-size:14.3px;letter-spacing:-0.45px">60 INGRESSI DIGITALI</div>
<div class="a" style="left:70px;top:430px;width:11px;height:1px;background:repeating-linear-gradient(90deg,#a0a0a0 0 1px,transparent 1px 2px)"></div>
<svg class="a" style="left:81px;top:424px" width="17" height="14" viewBox="0 0 17 14"><path d="M0.5 0.5h12l3.5 3.5v9.5h-15.5z" fill="#f2dccb" stroke="#555"/><rect x="3.5" y="3.5" width="7" height="6" fill="#cfe6f8" stroke="#2a6fc0"/><path d="M5 2.5v1M9 2.5v1M5 9.5v1M9 9.5v1" stroke="#e07020"/></svg>
<div class="t" style="left:103px;top:423px;font-size:14.3px;letter-spacing:-0.45px">61 INGRESSI DIGITALI</div>
<div class="a" style="left:70px;top:452px;width:11px;height:1px;background:repeating-linear-gradient(90deg,#a0a0a0 0 1px,transparent 1px 2px)"></div>
<svg class="a" style="left:81px;top:446px" width="17" height="14" viewBox="0 0 17 14"><path d="M0.5 0.5h12l3.5 3.5v9.5h-15.5z" fill="#f2dccb" stroke="#555"/><rect x="3.5" y="3.5" width="7" height="6" fill="#cfe6f8" stroke="#2a6fc0"/><path d="M5 2.5v1M9 2.5v1M5 9.5v1M9 9.5v1" stroke="#e07020"/></svg>
<div class="t" style="left:103px;top:445px;font-size:14.3px;letter-spacing:-0.45px">62 USCITE DIGITALI - 1</div>
<div class="a" style="left:70px;top:474px;width:11px;height:1px;background:repeating-linear-gradient(90deg,#a0a0a0 0 1px,transparent 1px 2px)"></div>
<svg class="a" style="left:81px;top:468px" width="17" height="14" viewBox="0 0 17 14"><path d="M0.5 0.5h12l3.5 3.5v9.5h-15.5z" fill="#f2dccb" stroke="#555"/><rect x="3.5" y="3.5" width="7" height="6" fill="#cfe6f8" stroke="#2a6fc0"/><path d="M5 2.5v1M9 2.5v1M5 9.5v1M9 9.5v1" stroke="#e07020"/></svg>
<div class="t" style="left:103px;top:467px;font-size:14.3px;letter-spacing:-0.45px">63 USCITE DIGITALI - 2</div>
<div class="a" style="left:70px;top:496px;width:11px;height:1px;background:repeating-linear-gradient(90deg,#a0a0a0 0 1px,transparent 1px 2px)"></div>
<svg class="a" style="left:81px;top:490px" width="17" height="14" viewBox="0 0 17 14"><path d="M0.5 0.5h12l3.5 3.5v9.5h-15.5z" fill="#f2dccb" stroke="#555"/><rect x="3.5" y="3.5" width="7" height="6" fill="#cfe6f8" stroke="#2a6fc0"/><path d="M5 2.5v1M9 2.5v1M5 9.5v1M9 9.5v1" stroke="#e07020"/></svg>
<div class="t" style="left:103px;top:489px;font-size:14.3px;letter-spacing:-0.45px">64 INGRESSI ANALOGICI</div>
<div class="a" style="left:70px;top:518px;width:11px;height:1px;background:repeating-linear-gradient(90deg,#a0a0a0 0 1px,transparent 1px 2px)"></div>
<svg class="a" style="left:81px;top:512px" width="17" height="14" viewBox="0 0 17 14"><path d="M0.5 0.5h12l3.5 3.5v9.5h-15.5z" fill="#f2dccb" stroke="#555"/><rect x="3.5" y="3.5" width="7" height="6" fill="#cfe6f8" stroke="#2a6fc0"/><path d="M5 2.5v1M9 2.5v1M5 9.5v1M9 9.5v1" stroke="#e07020"/></svg>
<div class="t" style="left:103px;top:511px;font-size:14.3px;letter-spacing:-0.45px">70 INGRESSI DIGITALI</div>
<div class="a" style="left:70px;top:540px;width:11px;height:1px;background:repeating-linear-gradient(90deg,#a0a0a0 0 1px,transparent 1px 2px)"></div>
<svg class="a" style="left:81px;top:534px" width="17" height="14" viewBox="0 0 17 14"><path d="M0.5 0.5h12l3.5 3.5v9.5h-15.5z" fill="#f2dccb" stroke="#555"/><rect x="3.5" y="3.5" width="7" height="6" fill="#cfe6f8" stroke="#2a6fc0"/><path d="M5 2.5v1M9 2.5v1M5 9.5v1M9 9.5v1" stroke="#e07020"/></svg>
<div class="t" style="left:103px;top:533px;font-size:14.3px;letter-spacing:-0.45px">71 INGRESSI DIGITALI</div>
<div class="a" style="left:70px;top:562px;width:11px;height:1px;background:repeating-linear-gradient(90deg,#a0a0a0 0 1px,transparent 1px 2px)"></div>
<svg class="a" style="left:81px;top:556px" width="17" height="14" viewBox="0 0 17 14"><path d="M0.5 0.5h12l3.5 3.5v9.5h-15.5z" fill="#f2dccb" stroke="#555"/><rect x="3.5" y="3.5" width="7" height="6" fill="#cfe6f8" stroke="#2a6fc0"/><path d="M5 2.5v1M9 2.5v1M5 9.5v1M9 9.5v1" stroke="#e07020"/></svg>
<div class="t" style="left:103px;top:555px;font-size:14.3px;letter-spacing:-0.45px">75 USCITE DIGITALI-1</div>
<div class="a" style="left:70px;top:584px;width:11px;height:1px;background:repeating-linear-gradient(90deg,#a0a0a0 0 1px,transparent 1px 2px)"></div>
<svg class="a" style="left:81px;top:578px" width="17" height="14" viewBox="0 0 17 14"><path d="M0.5 0.5h12l3.5 3.5v9.5h-15.5z" fill="#f2dccb" stroke="#555"/><rect x="3.5" y="3.5" width="7" height="6" fill="#cfe6f8" stroke="#2a6fc0"/><path d="M5 2.5v1M9 2.5v1M5 9.5v1M9 9.5v1" stroke="#e07020"/></svg>
<div class="t" style="left:103px;top:577px;font-size:14.3px;letter-spacing:-0.45px">76 USCITE DIGITALI-2</div>
<div class="a" style="left:70px;top:606px;width:11px;height:1px;background:repeating-linear-gradient(90deg,#a0a0a0 0 1px,transparent 1px 2px)"></div>
<svg class="a" style="left:81px;top:600px" width="17" height="14" viewBox="0 0 17 14"><path d="M0.5 0.5h12l3.5 3.5v9.5h-15.5z" fill="#f2dccb" stroke="#555"/><rect x="3.5" y="3.5" width="7" height="6" fill="#cfe6f8" stroke="#2a6fc0"/><path d="M5 2.5v1M9 2.5v1M5 9.5v1M9 9.5v1" stroke="#e07020"/></svg>
<div class="t" style="left:103px;top:599px;font-size:14.3px;letter-spacing:-0.45px">80 USCITE ANALOGICHE</div>
<div class="a" style="left:70px;top:628px;width:11px;height:1px;background:repeating-linear-gradient(90deg,#a0a0a0 0 1px,transparent 1px 2px)"></div>
<svg class="a" style="left:81px;top:622px" width="17" height="14" viewBox="0 0 17 14"><path d="M0.5 0.5h12l3.5 3.5v9.5h-15.5z" fill="#f4f0a8" stroke="#555"/><path d="M3 4.5h9M3 7h9M3 9.5h9M5.5 3v8M8 3v8M10.5 3v8" stroke="#555" stroke-width="0.9"/></svg>
<div class="t" style="left:103px;top:621px;font-size:14.3px;letter-spacing:-0.45px">90 MORSETTIERA</div>
<div class="a" style="left:70px;top:650px;width:11px;height:1px;background:repeating-linear-gradient(90deg,#a0a0a0 0 1px,transparent 1px 2px)"></div>
<svg class="a" style="left:81px;top:644px" width="17" height="14" viewBox="0 0 17 14"><path d="M0.5 0.5h12l3.5 3.5v9.5h-15.5z" fill="#f4f0a8" stroke="#555"/><path d="M3 4.5h9M3 7h9M3 9.5h9M5.5 3v8M8 3v8M10.5 3v8" stroke="#555" stroke-width="0.9"/></svg>
<div class="t" style="left:103px;top:643px;font-size:14.3px;letter-spacing:-0.45px">91 MORSETTIERA</div>
<div class="a" style="left:70px;top:672px;width:11px;height:1px;background:repeating-linear-gradient(90deg,#a0a0a0 0 1px,transparent 1px 2px)"></div>
<svg class="a" style="left:81px;top:666px" width="17" height="14" viewBox="0 0 17 14"><path d="M0.5 0.5h12l3.5 3.5v9.5h-15.5z" fill="#f4f0a8" stroke="#555"/><path d="M3 4.5h9M3 7h9M3 9.5h9M5.5 3v8M8 3v8M10.5 3v8" stroke="#555" stroke-width="0.9"/></svg>
<div class="t" style="left:103px;top:665px;font-size:14.3px;letter-spacing:-0.45px">92 MORSETTIERA</div>
</div>
<div class="a" style="left:243px;top:249px;width:16px;height:682px;background:#f0f0f0"></div>
<div class="a" style="left:244px;top:381px;width:14px;height:381px;background:#cdcdcd"></div>
<svg class="a" style="left:246px;top:256px" width="10" height="6" viewBox="0 0 10 6"><path d="M1 5L5 1L9 5" fill="none" stroke="#606060" stroke-width="1.5"/></svg>
<svg class="a" style="left:246px;top:921px" width="10" height="6" viewBox="0 0 10 6"><path d="M1 1L5 5L9 1" fill="none" stroke="#606060" stroke-width="1.5"/></svg>
<div class="a" style="left:5px;top:931px;width:254px;height:15px;background:#f0f0f0"></div>
<div class="a" style="left:22px;top:931px;width:112px;height:15px;background:#cdcdcd"></div>
<svg class="a" style="left:11px;top:934px" width="6" height="10" viewBox="0 0 6 10"><path d="M5 1L1 5L5 9" fill="none" stroke="#606060" stroke-width="1.5"/></svg>
<svg class="a" style="left:232px;top:934px" width="6" height="10" viewBox="0 0 6 10"><path d="M1 1L5 5L1 9" fill="none" stroke="#606060" stroke-width="1.5"/></svg>
<div class="a" style="left:62px;top:949px;width:201px;height:1px;background:#000"></div>
<div class="a" style="left:4px;top:949px;width:59px;height:30px;border:1px solid #000;border-top:none;background:#f0f0f0"></div>
<div class="t" style="left:9px;top:957px;font-size:14.6px">Albero</div>
<div class="t" style="left:70px;top:957px;font-size:14.6px;color:#8a8a8a">Elenco</div>
<div class="a" style="left:120px;top:953px;width:1px;height:22px;background:#c8c8c8"></div>
<div class="a" style="left:263px;top:81px;width:4px;height:899px;background:#fdfdfd"></div>
<div class="a" style="left:267px;top:80px;width:1274px;height:900px;background:#f7f7f7;border-left:1px solid #b4b4b4;border-top:1px solid #b4b4b4;border-right:1px solid #b4b4b4"></div>
<div class="a" style="left:268px;top:110px;width:1272px;height:870px;background:#b9d1ea"></div>
<div class="a" style="left:270px;top:112px;width:1268px;height:865px;background:#f0f0f0;border-left:1px solid #696969;border-top:2px solid #696969"></div>
<svg class="a" style="left:268px;top:82px" width="680" height="30" viewBox="268 82 680 30"><path d="M272 109.5 L298 83.5 L425 83.5 L430 88 L430 109.5 Z" fill="#bcd2ea" stroke="#a8a8a8" stroke-width="1"/><path d="M430 109.5 L430 88 L434 83.5 L604 83.5 L609 88 L587 109.5 Z" fill="#bcd2ea" stroke="#a8a8a8" stroke-width="1"/><path d="M587 109.5 L613 83.5 L943 83.5 L943 109.5 Z" fill="#b5cae4" stroke="#d8d8d8" stroke-width="1"/><path d="M272 109.5 L298 83.5" stroke="#fff" stroke-width="1" opacity="0.6"/></svg>
<div class="t" style="left:310px;top:89px;font-size:14.6px">=L/34 (HD2150)</div>
<div class="t" style="left:447px;top:89px;font-size:14.6px">=L/40 (HD2150_MOD)</div>
<div class="a" style="left:920px;top:86px;width:20px;height:21px;background:#c84a4d"></div>
<svg class="a" style="left:926px;top:92px" width="8" height="8" viewBox="0 0 8 8"><path d="M1.5 1.5l5 5M6.5 1.5l-5 5" stroke="#fff" stroke-width="1.4"/></svg>
<svg class="a" style="left:1523px;top:92px" width="10" height="6" viewBox="0 0 10 6"><path d="M0 0h10L5 6z" fill="#000"/></svg>
<div class="a" style="left:1519px;top:113px;width:18px;height:845px;background:#f0f0f0"></div>
<div class="a" style="left:1520px;top:130px;width:15px;height:809px;background:#cdcdcd"></div>
<svg class="a" style="left:1522px;top:118px" width="10" height="6" viewBox="0 0 10 6"><path d="M1 5L5 1L9 5" fill="none" stroke="#606060" stroke-width="1.5"/></svg>
<svg class="a" style="left:1522px;top:947px" width="10" height="6" viewBox="0 0 10 6"><path d="M1 1L5 5L9 1" fill="none" stroke="#606060" stroke-width="1.5"/></svg>
<div class="a" style="left:271px;top:958px;width:1266px;height:17px;background:#f0f0f0"></div>
<div class="a" style="left:289px;top:959px;width:1212px;height:15px;background:#cdcdcd"></div>
<svg class="a" style="left:277px;top:962px" width="6" height="10" viewBox="0 0 6 10"><path d="M5 1L1 5L5 9" fill="none" stroke="#606060" stroke-width="1.5"/></svg>
<svg class="a" style="left:1507px;top:962px" width="6" height="10" viewBox="0 0 6 10"><path d="M1 1L5 5L1 9" fill="none" stroke="#606060" stroke-width="1.5"/></svg>
<svg class="a" style="left:271px;top:113px" width="1248" height="845" viewBox="271 113 1248 845" font-family="Liberation Sans, sans-serif">
<defs><pattern id="dg" x="2" y="0" width="11" height="11" patternUnits="userSpaceOnUse"><rect x="0" y="0" width="1" height="1" fill="#bdbdbd"/><rect x="6" y="0" width="1" height="1" fill="#bdbdbd"/><rect x="0" y="6" width="1" height="1" fill="#bdbdbd"/><rect x="6" y="6" width="1" height="1" fill="#bdbdbd"/></pattern></defs>
<rect x="271" y="113" width="1248" height="845" fill="#000"/>
<g shape-rendering="crispEdges" stroke-width="1">
<path d="M272 115.5H1448" stroke="#ffffff" />
<path d="M272.5 115V947" stroke="#ffffff" />
<path d="M1447.5 115V947" stroke="#ffffff" />
<path d="M272 946.5H1448" stroke="#ffffff" />
<path d="M321.5 115V947" stroke="#ffffff" />
<path d="M321 135.5H1448" stroke="#ffffff" />
<path d="M321 844.5H1448" stroke="#ffffff" />
<path d="M434.5 115V136" stroke="#ffffff" />
<path d="M547.5 115V136" stroke="#ffffff" />
<path d="M659.5 115V136" stroke="#ffffff" />
<path d="M772.5 115V136" stroke="#ffffff" />
<path d="M885.5 115V136" stroke="#ffffff" />
<path d="M997.5 115V136" stroke="#ffffff" />
<path d="M1110.5 115V136" stroke="#ffffff" />
<path d="M1222.5 115V136" stroke="#ffffff" />
<path d="M1334.5 115V136" stroke="#ffffff" />
<path d="M271 255.5H1519" stroke="#ffffff" />
<path d="M695.5 113V958" stroke="#ffffff" />
</g>
<text x="376.5" y="132" font-size="18" fill="#ffffff" text-anchor="middle" >0</text>
<text x="489.5" y="132" font-size="18" fill="#ffffff" text-anchor="middle" >1</text>
<text x="602.0" y="132" font-size="18" fill="#ffffff" text-anchor="middle" >2</text>
<text x="714.5" y="132" font-size="18" fill="#ffffff" text-anchor="middle" >3</text>
<text x="827.5" y="132" font-size="18" fill="#ffffff" text-anchor="middle" >4</text>
<text x="940.0" y="132" font-size="18" fill="#ffffff" text-anchor="middle" >5</text>
<text x="1052.5" y="132" font-size="18" fill="#ffffff" text-anchor="middle" >6</text>
<text x="1165.0" y="132" font-size="18" fill="#ffffff" text-anchor="middle" >7</text>
<text x="1277.0" y="132" font-size="18" fill="#ffffff" text-anchor="middle" >8</text>
<text x="1389.5" y="132" font-size="18" fill="#ffffff" text-anchor="middle" >9</text>
<text x="301" y="935" font-size="11.3" fill="#ff0000" text-anchor="start" transform="rotate(-90 301 935)" textLength="535" lengthAdjust="spacingAndGlyphs">Il presente disegno è di proprietà di Pontenossa S.p.A. - A termine di legge ogni diritto è riservato.</text>
<g shape-rendering="crispEdges">
<path d="M414 160.5H1302" stroke="#ff0000" />
<path d="M414 176.5H1302" stroke="#ff0000" />
<path d="M464.5 160V314" stroke="#ff0000" />
<path d="M486.5 176V314" stroke="#ff0000" />
</g>
<path d="M418 157 L425 160.5 L418 164 Z" fill="#ff0000"/>
<path d="M1294 157 L1301 160.5 L1294 164 Z" fill="#ff0000"/>
<path d="M418 173 L425 176.5 L418 180 Z" fill="#ff0000"/>
<path d="M1294 173 L1301 176.5 L1294 180 Z" fill="#ff0000"/>
<circle cx="464.5" cy="160.5" r="2.5" fill="#ff0000"/>
<circle cx="486.5" cy="176.5" r="2.5" fill="#ff0000"/>
<text x="412" y="164" font-size="10.5" fill="#ffff00" text-anchor="end" >20.04</text>
<text x="380" y="163" font-size="6.5" fill="#00f000" text-anchor="end" >20.3 /</text>
<text x="412" y="180" font-size="10.5" fill="#ffff00" text-anchor="end" textLength="40" lengthAdjust="spacingAndGlyphs">0110VAC</text>
<text x="368" y="179" font-size="6.5" fill="#00f000" text-anchor="end" >20.5 /</text>
<text x="1304" y="164" font-size="10.5" fill="#ffff00" text-anchor="start" >20.04</text>
<text x="1332" y="163" font-size="6.5" fill="#00f000" text-anchor="start" >/ 41.0</text>
<text x="1304" y="180" font-size="10.5" fill="#ffff00" text-anchor="start" textLength="40" lengthAdjust="spacingAndGlyphs">0110VAC</text>
<text x="1347" y="179" font-size="6.5" fill="#00f000" text-anchor="start" >/ 41.0</text>
<g shape-rendering="crispEdges">
<path d="M748.5 258V314" stroke="#ff0000" />
<path d="M770.5 258V314" stroke="#ff0000" />
</g>
<path d="M744.5 262 L749 255.5 L753.5 262 Z" fill="#ff0000"/>
<path d="M766.5 256 L771 262.5 L775.5 256 Z" fill="#ff0000"/>
<text x="752" y="250" font-size="10.5" fill="#ffff00" text-anchor="start" transform="rotate(-90 752 250)" >40.05</text>
<text x="752" y="222" font-size="6.5" fill="#00f000" text-anchor="start" transform="rotate(-90 752 222)" >/ 64.1</text>
<text x="774" y="250" font-size="10.5" fill="#ffff00" text-anchor="start" transform="rotate(-90 774 250)" >64.01</text>
<text x="774" y="222" font-size="6.5" fill="#00f000" text-anchor="start" transform="rotate(-90 774 222)" >/ 64.1</text>
<text x="745" y="297" font-size="8.5" fill="#ff0000" text-anchor="start" transform="rotate(-90 745 297)" >40.05</text>
<text x="767" y="297" font-size="8.5" fill="#ff0000" text-anchor="start" transform="rotate(-90 767 297)" >64.01</text>
<g shape-rendering="crispEdges">
<path d="M442 313.5H881" stroke="#ffff00" />
<path d="M442 423.5H881" stroke="#ffff00" />
<path d="M442.5 313V424" stroke="#ffff00" />
<path d="M880.5 313V424" stroke="#ffff00" />
</g>
<text x="438" y="324" font-size="11" fill="#ffff00" text-anchor="end" >-40A1</text>
<text x="438" y="337" font-size="11" fill="#ffff00" text-anchor="end" >MP30</text>
<g shape-rendering="crispEdges">
<path d="M464.5 313V321" stroke="#ffff00" />
<path d="M486.5 313V321" stroke="#ffff00" />
<path d="M617.5 313V321" stroke="#ffff00" />
<path d="M639.5 313V321" stroke="#ffff00" />
<path d="M661.5 313V321" stroke="#ffff00" />
<path d="M683.5 313V321" stroke="#ffff00" />
<path d="M748.5 313V321" stroke="#ffff00" />
<path d="M770.5 313V321" stroke="#ffff00" />
<path d="M792.5 313V321" stroke="#ffff00" />
<path d="M814.5 313V321" stroke="#ffff00" />
<path d="M464.5 416V424" stroke="#ffff00" />
<path d="M486.5 416V424" stroke="#ffff00" />
<path d="M508.5 416V424" stroke="#ffff00" />
<path d="M529.5 416V424" stroke="#ffff00" />
<path d="M617.5 416V424" stroke="#ffff00" />
<path d="M639.5 416V424" stroke="#ffff00" />
<path d="M661.5 416V424" stroke="#ffff00" />
<path d="M683.5 416V424" stroke="#ffff00" />
<path d="M705.5 416V424" stroke="#ffff00" />
<path d="M748.5 416V424" stroke="#ffff00" />
<path d="M770.5 416V424" stroke="#ffff00" />
<path d="M792.5 416V424" stroke="#ffff00" />
<path d="M814.5 416V424" stroke="#ffff00" />
<path d="M836.5 416V424" stroke="#ffff00" />
<path d="M858.5 416V424" stroke="#ffff00" />
</g>
<circle cx="464.5" cy="324.5" r="3" fill="none" stroke="#ffff00"/>
<text x="464.5" y="334" font-size="7.5" fill="#00f000" text-anchor="middle" >1</text>
<circle cx="486.5" cy="324.5" r="3" fill="none" stroke="#ffff00"/>
<text x="486.5" y="334" font-size="7.5" fill="#00f000" text-anchor="middle" >2</text>
<circle cx="617.5" cy="324.5" r="3" fill="none" stroke="#ffff00"/>
<text x="617.5" y="334" font-size="7.5" fill="#00f000" text-anchor="middle" >12</text>
<circle cx="639.5" cy="324.5" r="3" fill="none" stroke="#ffff00"/>
<text x="639.5" y="334" font-size="7.5" fill="#00f000" text-anchor="middle" >13</text>
<circle cx="661.5" cy="324.5" r="3" fill="none" stroke="#ffff00"/>
<text x="661.5" y="334" font-size="7.5" fill="#00f000" text-anchor="middle" >14</text>
<circle cx="683.5" cy="324.5" r="3" fill="none" stroke="#ffff00"/>
<text x="683.5" y="334" font-size="7.5" fill="#00f000" text-anchor="middle" >15</text>
<circle cx="748.5" cy="324.5" r="3" fill="none" stroke="#ffff00"/>
<text x="748.5" y="334" font-size="7.5" fill="#00f000" text-anchor="middle" >16</text>
<circle cx="770.5" cy="324.5" r="3" fill="none" stroke="#ffff00"/>
<text x="770.5" y="334" font-size="7.5" fill="#00f000" text-anchor="middle" >17</text>
<circle cx="792.5" cy="324.5" r="3" fill="none" stroke="#ffff00"/>
<text x="792.5" y="334" font-size="7.5" fill="#00f000" text-anchor="middle" >18</text>
<circle cx="814.5" cy="324.5" r="3" fill="none" stroke="#ffff00"/>
<text x="814.5" y="334" font-size="7.5" fill="#00f000" text-anchor="middle" >19</text>
<text x="475" y="341" font-size="6" fill="#ffff00" text-anchor="middle" >85÷250VAC</text>
<text x="748.5" y="341" font-size="6" fill="#ffff00" text-anchor="middle" >+10V</text>
<text x="770.5" y="341" font-size="6" fill="#ffff00" text-anchor="middle" >-10V</text>
<text x="792.5" y="341" font-size="6" fill="#ffff00" text-anchor="middle" >+20mA</text>
<text x="814.5" y="341" font-size="6" fill="#ffff00" text-anchor="middle" >-20mA</text>
<circle cx="464.5" cy="412.5" r="3" fill="none" stroke="#ffff00"/>
<text x="464.5" y="408" font-size="7.5" fill="#00f000" text-anchor="middle" >3</text>
<text x="464.5" y="398.5" font-size="6" fill="#ffff00" text-anchor="middle" textLength="11.0" lengthAdjust="spacingAndGlyphs">+SIG</text>
<circle cx="486.5" cy="412.5" r="3" fill="none" stroke="#ffff00"/>
<text x="486.5" y="408" font-size="7.5" fill="#00f000" text-anchor="middle" >4</text>
<text x="486.5" y="398.5" font-size="6" fill="#ffff00" text-anchor="middle" textLength="11.0" lengthAdjust="spacingAndGlyphs">-SIG</text>
<circle cx="508.5" cy="412.5" r="3" fill="none" stroke="#ffff00"/>
<text x="508.5" y="408" font-size="7.5" fill="#00f000" text-anchor="middle" >5</text>
<text x="508.5" y="398.5" font-size="6" fill="#ffff00" text-anchor="middle" textLength="11.0" lengthAdjust="spacingAndGlyphs">COMM</text>
<circle cx="529.5" cy="412.5" r="3" fill="none" stroke="#ffff00"/>
<text x="529.5" y="408" font-size="7.5" fill="#00f000" text-anchor="middle" >6</text>
<text x="529.5" y="398.5" font-size="6" fill="#ffff00" text-anchor="middle" textLength="11.0" lengthAdjust="spacingAndGlyphs">+EXC</text>
<circle cx="617.5" cy="412.5" r="3" fill="none" stroke="#ffff00"/>
<text x="617.5" y="408" font-size="7.5" fill="#00f000" text-anchor="middle" >7</text>
<text x="617.5" y="398.5" font-size="6" fill="#ffff00" text-anchor="middle" textLength="11.0" lengthAdjust="spacingAndGlyphs">COMM</text>
<circle cx="639.5" cy="412.5" r="3" fill="none" stroke="#ffff00"/>
<text x="639.5" y="408" font-size="7.5" fill="#00f000" text-anchor="middle" >8</text>
<text x="639.5" y="398.5" font-size="6" fill="#ffff00" text-anchor="middle" >1</text>
<circle cx="661.5" cy="412.5" r="3" fill="none" stroke="#ffff00"/>
<text x="661.5" y="408" font-size="7.5" fill="#00f000" text-anchor="middle" >9</text>
<text x="661.5" y="398.5" font-size="6" fill="#ffff00" text-anchor="middle" >2</text>
<circle cx="683.5" cy="412.5" r="3" fill="none" stroke="#ffff00"/>
<text x="683.5" y="408" font-size="7.5" fill="#00f000" text-anchor="middle" >10</text>
<text x="683.5" y="398.5" font-size="6" fill="#ffff00" text-anchor="middle" >3</text>
<circle cx="705.5" cy="412.5" r="3" fill="none" stroke="#ffff00"/>
<text x="705.5" y="408" font-size="7.5" fill="#00f000" text-anchor="middle" >11</text>
<text x="705.5" y="398.5" font-size="6" fill="#ffff00" text-anchor="middle" textLength="8.2" lengthAdjust="spacingAndGlyphs">N/C</text>
<circle cx="748.5" cy="412.5" r="3" fill="none" stroke="#ffff00"/>
<text x="748.5" y="408" font-size="7.5" fill="#00f000" text-anchor="middle" >20</text>
<text x="748.5" y="398.5" font-size="6" fill="#ffff00" text-anchor="middle" textLength="16.5" lengthAdjust="spacingAndGlyphs">SP1(H)</text>
<circle cx="770.5" cy="412.5" r="3" fill="none" stroke="#ffff00"/>
<text x="770.5" y="408" font-size="7.5" fill="#00f000" text-anchor="middle" >21</text>
<text x="770.5" y="398.5" font-size="6" fill="#ffff00" text-anchor="middle" textLength="11.0" lengthAdjust="spacingAndGlyphs">COMM</text>
<circle cx="792.5" cy="412.5" r="3" fill="none" stroke="#ffff00"/>
<text x="792.5" y="408" font-size="7.5" fill="#00f000" text-anchor="middle" >22</text>
<text x="792.5" y="398.5" font-size="6" fill="#ffff00" text-anchor="middle" textLength="16.5" lengthAdjust="spacingAndGlyphs">SP3(L)</text>
<circle cx="814.5" cy="412.5" r="3" fill="none" stroke="#ffff00"/>
<text x="814.5" y="408" font-size="7.5" fill="#00f000" text-anchor="middle" >23</text>
<text x="814.5" y="398.5" font-size="6" fill="#ffff00" text-anchor="middle" textLength="24.8" lengthAdjust="spacingAndGlyphs">SPE(FAIL)</text>
<circle cx="836.5" cy="412.5" r="3" fill="none" stroke="#ffff00"/>
<text x="836.5" y="408" font-size="7.5" fill="#00f000" text-anchor="middle" >24</text>
<text x="836.5" y="398.5" font-size="6" fill="#ffff00" text-anchor="middle" textLength="11.0" lengthAdjust="spacingAndGlyphs">COMM</text>
<circle cx="858.5" cy="412.5" r="3" fill="none" stroke="#ffff00"/>
<text x="858.5" y="408" font-size="7.5" fill="#00f000" text-anchor="middle" >25</text>
<text x="858.5" y="398.5" font-size="6" fill="#ffff00" text-anchor="middle" textLength="24.8" lengthAdjust="spacingAndGlyphs">INTERLOCK</text>
<g shape-rendering="crispEdges">
<path d="M464.5 423V621" stroke="#ff0000" />
<path d="M486.5 423V621" stroke="#ff0000" />
<path d="M508.5 423V621" stroke="#ff0000" />
<path d="M529.5 423V621" stroke="#ff0000" />
</g>
<text x="463" y="449" font-size="9" fill="#ff0000" text-anchor="start" transform="rotate(-90 463 449)" >40.01</text>
<text x="485" y="449" font-size="9" fill="#ff0000" text-anchor="start" transform="rotate(-90 485 449)" >40.02</text>
<text x="507" y="449" font-size="9" fill="#ff0000" text-anchor="start" transform="rotate(-90 507 449)" >40.03</text>
<text x="528" y="449" font-size="9" fill="#ff0000" text-anchor="start" transform="rotate(-90 528 449)" >40.04</text>
<path d="M457 461.5 H537" stroke="#ffff00" stroke-dasharray="5 3"/>
<path d="M457 472.5 H537" stroke="#ffff00" stroke-dasharray="5 3"/>
<path d="M458 461.5 Q452 467.0 458 472.5" fill="none" stroke="#ffff00"/>
<path d="M536 461.5 Q542 467.0 536 472.5" fill="none" stroke="#ffff00"/>
<path d="M457 526.5 H537" stroke="#ffff00" stroke-dasharray="5 3"/>
<path d="M457 538.5 H537" stroke="#ffff00" stroke-dasharray="5 3"/>
<path d="M458 526.5 Q452 532.5 458 538.5" fill="none" stroke="#ffff00"/>
<path d="M536 526.5 Q542 532.5 536 538.5" fill="none" stroke="#ffff00"/>
<path d="M540 466.5 H558 V532.5 H540" fill="none" stroke="#ff0000" stroke-dasharray="4 2"/>
<path d="M546 488.5 H554" stroke="#4080ff"/>
<circle cx="557.5" cy="488.5" r="3" fill="none" stroke="#ffff00"/>
<path d="M553.5 488.5h8M557.5 484.5v8" stroke="#ffff00"/>
<text x="560" y="487" font-size="7" fill="#00f000" text-anchor="start" >FE</text>
<circle cx="568.5" cy="499.5" r="5" fill="none" stroke="#00f000" stroke-width="1.3"/><path d="M565 498.5h7M566 501h5M567.5 503h2M568.5 494v4" stroke="#00f000"/>
<text x="458" y="498" font-size="10.5" fill="#ffff00" text-anchor="end" >-XAN1</text>
<path d="M464.5 489V499" stroke="#ffff00" shape-rendering="crispEdges"/>
<circle cx="464.5" cy="494.5" r="2" fill="none" stroke="#ffff00"/>
<text x="468" y="497" font-size="7" fill="#00f000" text-anchor="start" >1</text>
<path d="M486.5 489V499" stroke="#ffff00" shape-rendering="crispEdges"/>
<circle cx="486.5" cy="494.5" r="2" fill="none" stroke="#ffff00"/>
<text x="490" y="497" font-size="7" fill="#00f000" text-anchor="start" >2</text>
<path d="M508.5 489V499" stroke="#ffff00" shape-rendering="crispEdges"/>
<circle cx="508.5" cy="494.5" r="2" fill="none" stroke="#ffff00"/>
<text x="512" y="497" font-size="7" fill="#00f000" text-anchor="start" >3</text>
<path d="M529.5 489V499" stroke="#ffff00" shape-rendering="crispEdges"/>
<circle cx="529.5" cy="494.5" r="2" fill="none" stroke="#ffff00"/>
<text x="533" y="497" font-size="7" fill="#00f000" text-anchor="start" >4</text>
<g shape-rendering="crispEdges">
<path d="M442 516.5H569" stroke="#ffff00" />
</g>
<text x="440" y="513" font-size="7" fill="#ffff00" text-anchor="end" >-W3B01</text>
<text x="440" y="521" font-size="7" fill="#ffff00" text-anchor="end" >4x1,5</text>
<text x="472" y="513" font-size="5.5" fill="#ff0000" text-anchor="start" transform="rotate(opacity="0.8" 472 513)" >WH</text>
<text x="493" y="513" font-size="5.5" fill="#ff0000" text-anchor="start" transform="rotate(opacity="0.8" 493 513)" >BN</text>
<text x="515" y="513" font-size="5.5" fill="#ff0000" text-anchor="start" transform="rotate(opacity="0.8" 515 513)" >YE</text>
<text x="537" y="513" font-size="5.5" fill="#ff0000" text-anchor="start" transform="rotate(opacity="0.8" 537 513)" >GN</text>
<text x="560" y="513" font-size="5.5" fill="#ff0000" text-anchor="start" transform="rotate(opacity="0.8" 560 513)" >GN</text>
<rect x="382.5" y="554.5" width="514" height="241" fill="none" stroke="#00ffff" stroke-dasharray="10 2 2 2" shape-rendering="crispEdges"/>
<text x="337" y="565" font-size="9.8" fill="#ffff00" text-anchor="start" >+CAMPO</text>
<rect x="420.5" y="571.5" width="433" height="71" fill="none" stroke="#ffff00" stroke-dasharray="6 4" shape-rendering="crispEdges"/>
<text x="416" y="582" font-size="10.5" fill="#ffff00" text-anchor="end" >-JB01</text>
<text x="459" y="624" font-size="10.5" fill="#ffff00" text-anchor="end" >-X1</text>
<g shape-rendering="crispEdges">
<path d="M464 609.5H749" stroke="#ff0000" />
<path d="M486 603.5H771" stroke="#ff0000" />
<path d="M508 598.5H793" stroke="#ff0000" />
<path d="M529 592.5H815" stroke="#ff0000" />
<path d="M606.5 609V621" stroke="#ff0000" />
<path d="M628.5 603V621" stroke="#ff0000" />
<path d="M650.5 598V621" stroke="#ff0000" />
<path d="M671.5 592V621" stroke="#ff0000" />
<path d="M748.5 609V621" stroke="#ff0000" />
<path d="M770.5 603V621" stroke="#ff0000" />
<path d="M792.5 598V621" stroke="#ff0000" />
<path d="M814.5 592V621" stroke="#ff0000" />
</g>
<circle cx="464.5" cy="609.5" r="2.5" fill="#ff0000"/>
<circle cx="606.5" cy="609.5" r="2.5" fill="#ff0000"/>
<circle cx="486.5" cy="603.5" r="2.5" fill="#ff0000"/>
<circle cx="628.5" cy="603.5" r="2.5" fill="#ff0000"/>
<circle cx="508.5" cy="598.5" r="2.5" fill="#ff0000"/>
<circle cx="650.5" cy="598.5" r="2.5" fill="#ff0000"/>
<circle cx="529.5" cy="592.5" r="2.5" fill="#ff0000"/>
<circle cx="671.5" cy="592.5" r="2.5" fill="#ff0000"/>
<path d="M464.5 614V627" stroke="#ffff00" shape-rendering="crispEdges"/>
<circle cx="464.5" cy="620.5" r="2.2" fill="none" stroke="#ffff00"/>
<text x="468" y="624" font-size="8" fill="#00f000" text-anchor="start" >1</text>
<path d="M486.5 614V627" stroke="#ffff00" shape-rendering="crispEdges"/>
<circle cx="486.5" cy="620.5" r="2.2" fill="none" stroke="#ffff00"/>
<text x="490" y="624" font-size="8" fill="#00f000" text-anchor="start" >2</text>
<path d="M508.5 614V627" stroke="#ffff00" shape-rendering="crispEdges"/>
<circle cx="508.5" cy="620.5" r="2.2" fill="none" stroke="#ffff00"/>
<text x="512" y="624" font-size="8" fill="#00f000" text-anchor="start" >3</text>
<path d="M529.5 614V627" stroke="#ffff00" shape-rendering="crispEdges"/>
<circle cx="529.5" cy="620.5" r="2.2" fill="none" stroke="#ffff00"/>
<text x="533" y="624" font-size="8" fill="#00f000" text-anchor="start" >4</text>
<path d="M606.5 614V627" stroke="#ffff00" shape-rendering="crispEdges"/>
<circle cx="606.5" cy="620.5" r="2.2" fill="none" stroke="#ffff00"/>
<text x="610" y="624" font-size="8" fill="#00f000" text-anchor="start" >5</text>
<path d="M628.5 614V627" stroke="#ffff00" shape-rendering="crispEdges"/>
<circle cx="628.5" cy="620.5" r="2.2" fill="none" stroke="#ffff00"/>
<text x="632" y="624" font-size="8" fill="#00f000" text-anchor="start" >6</text>
<path d="M650.5 614V627" stroke="#ffff00" shape-rendering="crispEdges"/>
<circle cx="650.5" cy="620.5" r="2.2" fill="none" stroke="#ffff00"/>
<text x="654" y="624" font-size="8" fill="#00f000" text-anchor="start" >7</text>
<path d="M672.5 614V627" stroke="#ffff00" shape-rendering="crispEdges"/>
<circle cx="672.5" cy="620.5" r="2.2" fill="none" stroke="#ffff00"/>
<text x="676" y="624" font-size="8" fill="#00f000" text-anchor="start" >8</text>
<path d="M748.5 614V627" stroke="#ffff00" shape-rendering="crispEdges"/>
<circle cx="748.5" cy="620.5" r="2.2" fill="none" stroke="#ffff00"/>
<text x="752" y="624" font-size="8" fill="#00f000" text-anchor="start" >9</text>
<path d="M770.5 614V627" stroke="#ffff00" shape-rendering="crispEdges"/>
<circle cx="770.5" cy="620.5" r="2.2" fill="none" stroke="#ffff00"/>
<text x="774" y="624" font-size="8" fill="#00f000" text-anchor="start" >10</text>
<path d="M792.5 614V627" stroke="#ffff00" shape-rendering="crispEdges"/>
<circle cx="792.5" cy="620.5" r="2.2" fill="none" stroke="#ffff00"/>
<text x="796" y="624" font-size="8" fill="#00f000" text-anchor="start" >11</text>
<path d="M814.5 614V627" stroke="#ffff00" shape-rendering="crispEdges"/>
<circle cx="814.5" cy="620.5" r="2.2" fill="none" stroke="#ffff00"/>
<text x="818" y="624" font-size="8" fill="#00f000" text-anchor="start" >12</text>
<g shape-rendering="crispEdges">
<path d="M464.5 622V736" stroke="#ff0000" />
<path d="M464 735.5H503" stroke="#ff0000" />
<path d="M485.5 622V687" stroke="#ff0000" />
<path d="M485 686.5H574" stroke="#ff0000" />
<path d="M573.5 686V736" stroke="#ff0000" />
<path d="M557 735.5H574" stroke="#ff0000" />
<path d="M507.5 622V676" stroke="#ff0000" />
<path d="M507 675.5H585" stroke="#ff0000" />
<path d="M584.5 675V785" stroke="#ff0000" />
<path d="M529 784.5H585" stroke="#ff0000" />
<path d="M529.5 762V785" stroke="#ff0000" />
<path d="M529.5 622V708" stroke="#ff0000" />
</g>
<path d="M529.5 707.5 L524.1 713.1 L520.6 713.1 L520.6 716.7 L517.2 716.7 L517.2 720.3 L513.7 720.3 L513.7 723.9 L510.3 723.9 L510.3 727.4 L506.8 727.4 L506.8 731.0 L502.5 735.5M519.5 712.0h2.2v2.2h-2.2zM516.1 715.6h2.2v2.2h-2.2zM512.6 719.2h2.2v2.2h-2.2zM509.2 722.8h2.2v2.2h-2.2zM505.7 726.3h2.2v2.2h-2.2z" fill="none" stroke="#ffff00" stroke-width="1"/>
<path d="M529.5 707.5 L535.1 713.1 L538.7 713.1 L538.7 716.7 L542.3 716.7 L542.3 720.3 L545.9 720.3 L545.9 723.9 L549.4 723.9 L549.4 727.4 L553.0 727.4 L553.0 731.0 L557.5 735.5M537.6 712.0h2.2v2.2h-2.2zM541.2 715.6h2.2v2.2h-2.2zM544.8 719.2h2.2v2.2h-2.2zM548.3 722.8h2.2v2.2h-2.2zM551.9 726.3h2.2v2.2h-2.2z" fill="none" stroke="#ffff00" stroke-width="1"/>
<path d="M502.5 735.5 L507.9 740.9 L511.4 740.9 L511.4 744.4 L514.8 744.4 L514.8 747.8 L518.3 747.8 L518.3 751.3 L521.7 751.3 L521.7 754.7 L525.2 754.7 L525.2 758.2 L529.5 762.5M510.3 739.8h2.2v2.2h-2.2zM513.7 743.3h2.2v2.2h-2.2zM517.2 746.7h2.2v2.2h-2.2zM520.6 750.2h2.2v2.2h-2.2zM524.1 753.6h2.2v2.2h-2.2z" fill="none" stroke="#ffff00" stroke-width="1"/>
<path d="M557.5 735.5 L551.9 740.9 L548.3 740.9 L548.3 744.4 L544.7 744.4 L544.7 747.8 L541.1 747.8 L541.1 751.3 L537.6 751.3 L537.6 754.7 L534.0 754.7 L534.0 758.2 L529.5 762.5M547.2 739.8h2.2v2.2h-2.2zM543.6 743.3h2.2v2.2h-2.2zM540.0 746.7h2.2v2.2h-2.2zM536.5 750.2h2.2v2.2h-2.2zM532.9 753.6h2.2v2.2h-2.2z" fill="none" stroke="#ffff00" stroke-width="1"/>
<text x="531" y="698" font-size="7.5" fill="#ffff00" text-anchor="start" >+SIG</text>
<text x="531" y="706" font-size="7.5" fill="#ffff00" text-anchor="start" >+EXC</text>
<text x="501" y="733" font-size="7.5" fill="#ffff00" text-anchor="end" >+SIG</text>
<text x="558" y="744" font-size="7.5" fill="#ffff00" text-anchor="start" >-SIG</text>
<text x="503" y="757" font-size="10.5" fill="#ffff00" text-anchor="end" >-40U1</text>
<text x="526" y="770" font-size="7.5" fill="#ffff00" text-anchor="end" >-SIG</text>
<text x="526" y="778" font-size="7.5" fill="#ffff00" text-anchor="end" >-EXC</text>
<g shape-rendering="crispEdges">
<path d="M606.5 622V736" stroke="#ff0000" />
<path d="M606 735.5H645" stroke="#ff0000" />
<path d="M628.5 622V687" stroke="#ff0000" />
<path d="M628 686.5H717" stroke="#ff0000" />
<path d="M716.5 686V736" stroke="#ff0000" />
<path d="M699 735.5H717" stroke="#ff0000" />
<path d="M650.5 622V676" stroke="#ff0000" />
<path d="M650 675.5H727" stroke="#ff0000" />
<path d="M726.5 675V785" stroke="#ff0000" />
<path d="M672 784.5H727" stroke="#ff0000" />
<path d="M672.5 762V785" stroke="#ff0000" />
<path d="M672.5 622V708" stroke="#ff0000" />
</g>
<path d="M672.5 707.5 L666.9 713.1 L663.3 713.1 L663.3 716.7 L659.7 716.7 L659.7 720.3 L656.1 720.3 L656.1 723.9 L652.6 723.9 L652.6 727.4 L649.0 727.4 L649.0 731.0 L644.5 735.5M662.2 712.0h2.2v2.2h-2.2zM658.6 715.6h2.2v2.2h-2.2zM655.0 719.2h2.2v2.2h-2.2zM651.5 722.8h2.2v2.2h-2.2zM647.9 726.3h2.2v2.2h-2.2z" fill="none" stroke="#ffff00" stroke-width="1"/>
<path d="M672.5 707.5 L677.9 713.1 L681.4 713.1 L681.4 716.7 L684.8 716.7 L684.8 720.3 L688.3 720.3 L688.3 723.9 L691.7 723.9 L691.7 727.4 L695.2 727.4 L695.2 731.0 L699.5 735.5M680.3 712.0h2.2v2.2h-2.2zM683.7 715.6h2.2v2.2h-2.2zM687.2 719.2h2.2v2.2h-2.2zM690.6 722.8h2.2v2.2h-2.2zM694.1 726.3h2.2v2.2h-2.2z" fill="none" stroke="#ffff00" stroke-width="1"/>
<path d="M644.5 735.5 L650.1 740.9 L653.7 740.9 L653.7 744.4 L657.3 744.4 L657.3 747.8 L660.9 747.8 L660.9 751.3 L664.4 751.3 L664.4 754.7 L668.0 754.7 L668.0 758.2 L672.5 762.5M652.6 739.8h2.2v2.2h-2.2zM656.2 743.3h2.2v2.2h-2.2zM659.8 746.7h2.2v2.2h-2.2zM663.3 750.2h2.2v2.2h-2.2zM666.9 753.6h2.2v2.2h-2.2z" fill="none" stroke="#ffff00" stroke-width="1"/>
<path d="M699.5 735.5 L694.1 740.9 L690.6 740.9 L690.6 744.4 L687.2 744.4 L687.2 747.8 L683.7 747.8 L683.7 751.3 L680.3 751.3 L680.3 754.7 L676.8 754.7 L676.8 758.2 L672.5 762.5M689.5 739.8h2.2v2.2h-2.2zM686.1 743.3h2.2v2.2h-2.2zM682.6 746.7h2.2v2.2h-2.2zM679.2 750.2h2.2v2.2h-2.2zM675.7 753.6h2.2v2.2h-2.2z" fill="none" stroke="#ffff00" stroke-width="1"/>
<text x="674" y="698" font-size="7.5" fill="#ffff00" text-anchor="start" >+SIG</text>
<text x="674" y="706" font-size="7.5" fill="#ffff00" text-anchor="start" >+EXC</text>
<text x="643" y="733" font-size="7.5" fill="#ffff00" text-anchor="end" >+SIG</text>
<text x="700" y="744" font-size="7.5" fill="#ffff00" text-anchor="start" >-SIG</text>
<text x="645" y="757" font-size="10.5" fill="#ffff00" text-anchor="end" >-40U2</text>
<text x="669" y="770" font-size="7.5" fill="#ffff00" text-anchor="end" >-SIG</text>
<text x="669" y="778" font-size="7.5" fill="#ffff00" text-anchor="end" >-EXC</text>
<g shape-rendering="crispEdges">
<path d="M748.5 622V736" stroke="#ff0000" />
<path d="M748 735.5H788" stroke="#ff0000" />
<path d="M770.5 622V687" stroke="#ff0000" />
<path d="M770 686.5H859" stroke="#ff0000" />
<path d="M858.5 686V736" stroke="#ff0000" />
<path d="M842 735.5H859" stroke="#ff0000" />
<path d="M792.5 622V676" stroke="#ff0000" />
<path d="M792 675.5H870" stroke="#ff0000" />
<path d="M869.5 675V785" stroke="#ff0000" />
<path d="M814 784.5H870" stroke="#ff0000" />
<path d="M814.5 762V785" stroke="#ff0000" />
<path d="M814.5 622V708" stroke="#ff0000" />
</g>
<path d="M814.5 707.5 L809.1 713.1 L805.6 713.1 L805.6 716.7 L802.2 716.7 L802.2 720.3 L798.7 720.3 L798.7 723.9 L795.3 723.9 L795.3 727.4 L791.8 727.4 L791.8 731.0 L787.5 735.5M804.5 712.0h2.2v2.2h-2.2zM801.1 715.6h2.2v2.2h-2.2zM797.6 719.2h2.2v2.2h-2.2zM794.2 722.8h2.2v2.2h-2.2zM790.7 726.3h2.2v2.2h-2.2z" fill="none" stroke="#ffff00" stroke-width="1"/>
<path d="M814.5 707.5 L820.1 713.1 L823.7 713.1 L823.7 716.7 L827.3 716.7 L827.3 720.3 L830.9 720.3 L830.9 723.9 L834.4 723.9 L834.4 727.4 L838.0 727.4 L838.0 731.0 L842.5 735.5M822.6 712.0h2.2v2.2h-2.2zM826.2 715.6h2.2v2.2h-2.2zM829.8 719.2h2.2v2.2h-2.2zM833.3 722.8h2.2v2.2h-2.2zM836.9 726.3h2.2v2.2h-2.2z" fill="none" stroke="#ffff00" stroke-width="1"/>
<path d="M787.5 735.5 L792.9 740.9 L796.4 740.9 L796.4 744.4 L799.8 744.4 L799.8 747.8 L803.3 747.8 L803.3 751.3 L806.7 751.3 L806.7 754.7 L810.2 754.7 L810.2 758.2 L814.5 762.5M795.3 739.8h2.2v2.2h-2.2zM798.7 743.3h2.2v2.2h-2.2zM802.2 746.7h2.2v2.2h-2.2zM805.6 750.2h2.2v2.2h-2.2zM809.1 753.6h2.2v2.2h-2.2z" fill="none" stroke="#ffff00" stroke-width="1"/>
<path d="M842.5 735.5 L836.9 740.9 L833.3 740.9 L833.3 744.4 L829.7 744.4 L829.7 747.8 L826.1 747.8 L826.1 751.3 L822.6 751.3 L822.6 754.7 L819.0 754.7 L819.0 758.2 L814.5 762.5M832.2 739.8h2.2v2.2h-2.2zM828.6 743.3h2.2v2.2h-2.2zM825.0 746.7h2.2v2.2h-2.2zM821.5 750.2h2.2v2.2h-2.2zM817.9 753.6h2.2v2.2h-2.2z" fill="none" stroke="#ffff00" stroke-width="1"/>
<text x="816" y="698" font-size="7.5" fill="#ffff00" text-anchor="start" >+SIG</text>
<text x="816" y="706" font-size="7.5" fill="#ffff00" text-anchor="start" >+EXC</text>
<text x="786" y="733" font-size="7.5" fill="#ffff00" text-anchor="end" >+SIG</text>
<text x="843" y="744" font-size="7.5" fill="#ffff00" text-anchor="start" >-SIG</text>
<text x="788" y="757" font-size="10.5" fill="#ffff00" text-anchor="end" >-40U3</text>
<text x="811" y="770" font-size="7.5" fill="#ffff00" text-anchor="end" >-SIG</text>
<text x="811" y="778" font-size="7.5" fill="#ffff00" text-anchor="end" >-EXC</text>
<g shape-rendering="crispEdges">
<path d="M508.5 844V947" stroke="#ffffff" />
<path d="M527.5 844V947" stroke="#ffffff" />
<path d="M628.5 844V947" stroke="#ffffff" />
<path d="M669.5 844V947" stroke="#ffffff" />
<path d="M699.5 844V947" stroke="#ffffff" />
<path d="M508 861.5H700" stroke="#ffffff" />
<path d="M508 877.5H700" stroke="#ffffff" />
<path d="M508 894.5H700" stroke="#ffffff" />
<path d="M508 910.5H700" stroke="#ffffff" />
<path d="M508 927.5H700" stroke="#ffffff" />
<path d="M699 894.5H1210" stroke="#ffffff" />
<path d="M894.5 844V947" stroke="#ffffff" />
<path d="M1014.5 844V947" stroke="#ffffff" />
<path d="M1135.5 844V947" stroke="#ffffff" />
<path d="M1209.5 844V947" stroke="#ffffff" />
<path d="M894 869.5H1136" stroke="#ffffff" />
</g>

<text x="517" y="906" font-size="8" fill="#00f000" text-anchor="middle" >1</text>
<text x="530" y="906" font-size="8.2" fill="#00f000" text-anchor="start" transform="rotate(textLength="96" lengthAdjust="spacingAndGlyphs" 530 906)" >MODIF. PIN 40A1-41A1</text>
<text x="631" y="906" font-size="8.2" fill="#00f000" text-anchor="start" transform="rotate(textLength="36" lengthAdjust="spacingAndGlyphs" 631 906)" >14.12.22</text>
<text x="672" y="906" font-size="8.2" fill="#00f000" text-anchor="start" >BAM</text>
<text x="517" y="922" font-size="8" fill="#00f000" text-anchor="middle" >0</text>
<text x="530" y="922" font-size="8.2" fill="#00f000" text-anchor="start" transform="rotate(textLength="46" lengthAdjust="spacingAndGlyphs" 530 922)" >EMISSIONE</text>
<text x="631" y="922" font-size="8.2" fill="#00f000" text-anchor="start" transform="rotate(textLength="36" lengthAdjust="spacingAndGlyphs" 631 922)" >02.04.21</text>
<text x="672" y="922" font-size="8.2" fill="#00f000" text-anchor="start" >BAM</text>
<text x="510" y="939" font-size="7.5" fill="#d8d8d8" text-anchor="start" textLength="16" lengthAdjust="spacingAndGlyphs">REV.</text>
<text x="550" y="939" font-size="7.5" fill="#d8d8d8" text-anchor="start" textLength="52" lengthAdjust="spacingAndGlyphs">DESCRIZIONE</text>
<text x="639" y="939" font-size="7.5" fill="#d8d8d8" text-anchor="start" textLength="22" lengthAdjust="spacingAndGlyphs">DATA.</text>
<text x="671" y="939" font-size="7.5" fill="#d8d8d8" text-anchor="start" textLength="26" lengthAdjust="spacingAndGlyphs">DISEG.</text>
<text x="705" y="857" font-size="8.5" fill="#ffffff" text-anchor="start" textLength="48" lengthAdjust="spacingAndGlyphs">IMPIANTO</text>
<text x="750" y="869" font-size="8.5" fill="#00f000" text-anchor="start" textLength="98" lengthAdjust="spacingAndGlyphs">QUADRO ELETTRICO</text>
<text x="730" y="881" font-size="8" fill="#00f000" text-anchor="start" opacity="0.5">...</text>
<text x="703" y="908" font-size="8.5" fill="#ffffff" text-anchor="start" textLength="60" lengthAdjust="spacingAndGlyphs" opacity="0.85">OGGETTO:</text>
<text x="724" y="928" font-size="8.5" fill="#00f000" text-anchor="start" textLength="143" lengthAdjust="spacingAndGlyphs">CELLE DI CARICO PESO SILO 7</text>
<text x="897" y="859" font-size="8.5" fill="#ffffff" text-anchor="start" textLength="32" lengthAdjust="spacingAndGlyphs">DISEG.</text>
<text x="960" y="858" font-size="8.5" fill="#00f000" text-anchor="start" textLength="20" lengthAdjust="spacingAndGlyphs">BAM</text>
<text x="897" y="884" font-size="8.5" fill="#ffffff" text-anchor="start" textLength="25" lengthAdjust="spacingAndGlyphs">DATA</text>
<text x="944" y="884" font-size="9" fill="#00f000" text-anchor="start" textLength="51" lengthAdjust="spacingAndGlyphs">02.04.2021</text>
<text x="1017" y="859" font-size="8.5" fill="#ffffff" text-anchor="start" textLength="24" lengthAdjust="spacingAndGlyphs">CTR.</text>
<text x="1080" y="859" font-size="8.5" fill="#00f000" text-anchor="start" textLength="20" lengthAdjust="spacingAndGlyphs">SCD</text>
<text x="1017" y="884" font-size="8.5" fill="#ffffff" text-anchor="start" textLength="28" lengthAdjust="spacingAndGlyphs">APPR.</text>
<text x="1080" y="884" font-size="8.5" fill="#00f000" text-anchor="start" textLength="20" lengthAdjust="spacingAndGlyphs">SCD</text>
<text x="1170" y="857" font-size="8.5" fill="#ffffff" text-anchor="middle" textLength="36" lengthAdjust="spacingAndGlyphs">FOGLIO</text>
<text x="1169" y="883" font-size="11" fill="#00f000" text-anchor="middle" >40</text>
<text x="897" y="909" font-size="8.5" fill="#ffffff" text-anchor="start" textLength="54" lengthAdjust="spacingAndGlyphs">COMMESSA</text>
<text x="956" y="932" font-size="11" fill="#00f000" text-anchor="middle" transform="rotate(textLength="32" lengthAdjust="spacingAndGlyphs" 956 932)" >Q.643</text>
<text x="1017" y="909" font-size="8.5" fill="#ffffff" text-anchor="start" textLength="55" lengthAdjust="spacingAndGlyphs">MATRICOLA</text>
<text x="1076" y="932" font-size="11" fill="#00f000" text-anchor="middle" transform="rotate(textLength="57" lengthAdjust="spacingAndGlyphs" 1076 932)" >082021.01</text>
<text x="1137" y="909" font-size="8.5" fill="#ffffff" text-anchor="start" textLength="66" lengthAdjust="spacingAndGlyphs">FOGLIO SUCC.</text>
<text x="1169" y="932" font-size="11" fill="#00f000" text-anchor="middle" >41</text>
<rect x="1210" y="846" width="235" height="97" fill="#ffffff" stroke="#000" stroke-width="1"/>
<rect x="1211.5" y="847.5" width="232" height="94" fill="#fdfdfd"/>
<rect x="1216" y="853" width="10" height="14" fill="#7a7a7a"/><rect x="1228" y="853" width="10" height="14" fill="#f7c400"/>
<rect x="1216" y="870" width="10" height="14" fill="#a8a8a8"/><rect x="1228" y="870" width="10" height="14" fill="#d8d8d8"/>
<text x="1241" y="868" font-size="19" fill="#111" text-anchor="start" font-weight="bold" textLength="70" lengthAdjust="spacingAndGlyphs">Balduzzi</text>
<text x="1241" y="885" font-size="17" fill="#8a8a8a" text-anchor="start" textLength="70" lengthAdjust="spacingAndGlyphs">Automazioni</text>
<rect x="1317.5" y="854" width="1.2" height="30" fill="#f7c400"/>
<text x="1325" y="860" font-size="7" fill="#a0a0a0" text-anchor="start" textLength="58" lengthAdjust="spacingAndGlyphs">Ingegneria elettrica</text>
<text x="1325" y="872" font-size="7" fill="#a0a0a0" text-anchor="start" textLength="113" lengthAdjust="spacingAndGlyphs">Quadri di automazione e distribuzione</text>
<text x="1325" y="884" font-size="7" fill="#a0a0a0" text-anchor="start" textLength="73" lengthAdjust="spacingAndGlyphs">Impianti bordo macchina</text>
<text x="1215" y="903" font-size="6.5" fill="#333" text-anchor="start" font-weight="bold" textLength="80" lengthAdjust="spacingAndGlyphs">Balduzzi Automazioni Srl</text>
<text x="1297" y="903" font-size="6.5" fill="#999" text-anchor="start" textLength="133" lengthAdjust="spacingAndGlyphs">via Ing. V. Balduzzi n.9 - 24023 Clusone (Bg)</text>
<text x="1215" y="914" font-size="6.5" fill="#999" text-anchor="start" textLength="100" lengthAdjust="spacingAndGlyphs">P.IVA e Cod.Fiscale 04275880161</text>
<text x="1215" y="925" font-size="6.5" fill="#999" text-anchor="start" textLength="155" lengthAdjust="spacingAndGlyphs">tel. 0346.090278 / 0346.090271  |  cell: 347.7066550</text>
<text x="1215" y="936" font-size="6.5" fill="#999" text-anchor="start" textLength="175" lengthAdjust="spacingAndGlyphs">info@balduzziautomazioni.it  |  www.balduzziautomazioni.it</text>
<mask id="rows" maskUnits="userSpaceOnUse" x="271" y="113" width="1248" height="845"><path d="M271 116.5H1519M271 121.5H1519M271 127.5H1519M271 132.5H1519M271 138.5H1519M271 143.5H1519M271 149.5H1519M271 154.5H1519M271 160.5H1519M271 165.5H1519M271 171.5H1519M271 176.5H1519M271 182.5H1519M271 187.5H1519M271 192.5H1519M271 198.5H1519M271 203.5H1519M271 209.5H1519M271 214.5H1519M271 220.5H1519M271 225.5H1519M271 231.5H1519M271 236.5H1519M271 242.5H1519M271 247.5H1519M271 253.5H1519M271 258.5H1519M271 264.5H1519M271 269.5H1519M271 275.5H1519M271 280.5H1519M271 286.5H1519M271 291.5H1519M271 297.5H1519M271 302.5H1519M271 308.5H1519M271 313.5H1519M271 318.5H1519M271 324.5H1519M271 329.5H1519M271 335.5H1519M271 340.5H1519M271 346.5H1519M271 351.5H1519M271 357.5H1519M271 362.5H1519M271 368.5H1519M271 373.5H1519M271 379.5H1519M271 384.5H1519M271 390.5H1519M271 395.5H1519M271 401.5H1519M271 406.5H1519M271 412.5H1519M271 417.5H1519M271 423.5H1519M271 428.5H1519M271 434.5H1519M271 439.5H1519M271 444.5H1519M271 450.5H1519M271 455.5H1519M271 461.5H1519M271 466.5H1519M271 472.5H1519M271 477.5H1519M271 483.5H1519M271 488.5H1519M271 494.5H1519M271 499.5H1519M271 505.5H1519M271 510.5H1519M271 516.5H1519M271 521.5H1519M271 527.5H1519M271 532.5H1519M271 538.5H1519M271 543.5H1519M271 549.5H1519M271 554.5H1519M271 560.5H1519M271 565.5H1519M271 570.5H1519M271 576.5H1519M271 581.5H1519M271 587.5H1519M271 592.5H1519M271 598.5H1519M271 603.5H1519M271 609.5H1519M271 614.5H1519M271 620.5H1519M271 625.5H1519M271 631.5H1519M271 636.5H1519M271 642.5H1519M271 647.5H1519M271 653.5H1519M271 658.5H1519M271 664.5H1519M271 669.5H1519M271 675.5H1519M271 680.5H1519M271 686.5H1519M271 691.5H1519M271 696.5H1519M271 702.5H1519M271 707.5H1519M271 713.5H1519M271 718.5H1519M271 724.5H1519M271 729.5H1519M271 735.5H1519M271 740.5H1519M271 746.5H1519M271 751.5H1519M271 757.5H1519M271 762.5H1519M271 768.5H1519M271 773.5H1519M271 779.5H1519M271 784.5H1519M271 790.5H1519M271 795.5H1519M271 801.5H1519M271 806.5H1519M271 811.5H1519M271 817.5H1519M271 822.5H1519M271 828.5H1519M271 833.5H1519M271 839.5H1519M271 844.5H1519M271 850.5H1519M271 855.5H1519M271 861.5H1519M271 866.5H1519M271 872.5H1519M271 877.5H1519M271 883.5H1519M271 888.5H1519M271 894.5H1519M271 899.5H1519M271 905.5H1519M271 910.5H1519M271 916.5H1519M271 921.5H1519M271 927.5H1519M271 932.5H1519M271 937.5H1519M271 943.5H1519M271 948.5H1519M271 954.5H1519" stroke="#fff" stroke-width="1" shape-rendering="crispEdges"/></mask>
<path mask="url(#rows)" d="M272.5 113V958M277.5 113V958M283.5 113V958M288.5 113V958M294.5 113V958M299.5 113V958M305.5 113V958M310.5 113V958M316.5 113V958M321.5 113V958M327.5 113V958M332.5 113V958M338.5 113V958M343.5 113V958M348.5 113V958M354.5 113V958M359.5 113V958M365.5 113V958M370.5 113V958M376.5 113V958M381.5 113V958M387.5 113V958M392.5 113V958M398.5 113V958M403.5 113V958M409.5 113V958M414.5 113V958M420.5 113V958M425.5 113V958M431.5 113V958M436.5 113V958M442.5 113V958M447.5 113V958M453.5 113V958M458.5 113V958M464.5 113V958M469.5 113V958M474.5 113V958M480.5 113V958M485.5 113V958M491.5 113V958M496.5 113V958M502.5 113V958M507.5 113V958M513.5 113V958M518.5 113V958M524.5 113V958M529.5 113V958M535.5 113V958M540.5 113V958M546.5 113V958M551.5 113V958M557.5 113V958M562.5 113V958M568.5 113V958M573.5 113V958M579.5 113V958M584.5 113V958M590.5 113V958M595.5 113V958M600.5 113V958M606.5 113V958M611.5 113V958M617.5 113V958M622.5 113V958M628.5 113V958M633.5 113V958M639.5 113V958M644.5 113V958M650.5 113V958M655.5 113V958M661.5 113V958M666.5 113V958M672.5 113V958M677.5 113V958M683.5 113V958M688.5 113V958M694.5 113V958M699.5 113V958M705.5 113V958M710.5 113V958M716.5 113V958M721.5 113V958M726.5 113V958M732.5 113V958M737.5 113V958M743.5 113V958M748.5 113V958M754.5 113V958M759.5 113V958M765.5 113V958M770.5 113V958M776.5 113V958M781.5 113V958M787.5 113V958M792.5 113V958M798.5 113V958M803.5 113V958M809.5 113V958M814.5 113V958M820.5 113V958M825.5 113V958M831.5 113V958M836.5 113V958M842.5 113V958M847.5 113V958M852.5 113V958M858.5 113V958M863.5 113V958M869.5 113V958M874.5 113V958M880.5 113V958M885.5 113V958M891.5 113V958M896.5 113V958M902.5 113V958M907.5 113V958M913.5 113V958M918.5 113V958M924.5 113V958M929.5 113V958M935.5 113V958M940.5 113V958M946.5 113V958M951.5 113V958M957.5 113V958M962.5 113V958M967.5 113V958M973.5 113V958M978.5 113V958M984.5 113V958M989.5 113V958M995.5 113V958M1000.5 113V958M1006.5 113V958M1011.5 113V958M1017.5 113V958M1022.5 113V958M1028.5 113V958M1033.5 113V958M1039.5 113V958M1044.5 113V958M1050.5 113V958M1055.5 113V958M1061.5 113V958M1066.5 113V958M1072.5 113V958M1077.5 113V958M1083.5 113V958M1088.5 113V958M1093.5 113V958M1099.5 113V958M1104.5 113V958M1110.5 113V958M1115.5 113V958M1121.5 113V958M1126.5 113V958M1132.5 113V958M1137.5 113V958M1143.5 113V958M1148.5 113V958M1154.5 113V958M1159.5 113V958M1165.5 113V958M1170.5 113V958M1176.5 113V958M1181.5 113V958M1187.5 113V958M1192.5 113V958M1198.5 113V958M1203.5 113V958M1209.5 113V958M1214.5 113V958M1219.5 113V958M1225.5 113V958M1230.5 113V958M1236.5 113V958M1241.5 113V958M1247.5 113V958M1252.5 113V958M1258.5 113V958M1263.5 113V958M1269.5 113V958M1274.5 113V958M1280.5 113V958M1285.5 113V958M1291.5 113V958M1296.5 113V958M1302.5 113V958M1307.5 113V958M1313.5 113V958M1318.5 113V958M1324.5 113V958M1329.5 113V958M1335.5 113V958M1340.5 113V958M1345.5 113V958M1351.5 113V958M1356.5 113V958M1362.5 113V958M1367.5 113V958M1373.5 113V958M1378.5 113V958M1384.5 113V958M1389.5 113V958M1395.5 113V958M1400.5 113V958M1406.5 113V958M1411.5 113V958M1417.5 113V958M1422.5 113V958M1428.5 113V958M1433.5 113V958M1439.5 113V958M1444.5 113V958M1450.5 113V958M1455.5 113V958M1461.5 113V958M1466.5 113V958M1471.5 113V958M1477.5 113V958M1482.5 113V958M1488.5 113V958M1493.5 113V958M1499.5 113V958M1504.5 113V958M1510.5 113V958M1515.5 113V958" stroke="#bdbdbd" stroke-width="1" shape-rendering="crispEdges"/>
<rect x="345" y="847" width="156" height="97" fill="#080c12" opacity="0.5"/>
<rect x="345" y="947" width="156" height="11" fill="#080c12" opacity="0.35"/>
</svg>
<div class="a" style="left:1541px;top:81px;width:140px;height:899px;background:#fdfdfd"></div>
<div class="a" style="left:1542px;top:80px;width:27px;height:428px;background:#fcfcfc;border-right:1px solid #a8a8a8;border-bottom:1px solid #a8a8a8"></div>
<div class="a" style="left:1542px;top:519px;width:27px;height:327px;background:#fcfcfc;border-right:1px solid #a8a8a8;border-bottom:1px solid #a8a8a8"></div>
<div class="a" style="left:1569px;top:80px;width:28px;height:452px;background:#fcfcfc;border-right:1px solid #a8a8a8;border-bottom:1px solid #a8a8a8"></div>
<div class="a" style="left:1569px;top:533px;width:28px;height:447px;background:#fcfcfc;border-right:1px solid #a8a8a8;border-bottom:1px solid #a8a8a8"></div>
<div class="a" style="left:1597px;top:82px;width:28px;height:117px;background:#fcfcfc;border-right:1px solid #a8a8a8;border-bottom:1px solid #a8a8a8"></div>
<div class="a" style="left:1597px;top:198px;width:28px;height:597px;background:#fcfcfc;border-right:1px solid #a8a8a8;border-bottom:1px solid #a8a8a8"></div>
<div class="a" style="left:1625px;top:80px;width:28px;height:571px;background:#fcfcfc;border-right:1px solid #a8a8a8;border-bottom:1px solid #a8a8a8"></div>
<div class="a" style="left:1625px;top:651px;width:28px;height:172px;background:#fcfcfc;border-right:1px solid #a8a8a8;border-bottom:1px solid #a8a8a8"></div>
<div class="a" style="left:1653px;top:80px;width:28px;height:372px;background:#fcfcfc;border-right:1px solid #a8a8a8;border-bottom:1px solid #a8a8a8"></div>
<div class="a" style="left:1653px;top:584px;width:28px;height:116px;background:#fcfcfc;border-right:1px solid #a8a8a8;border-bottom:1px solid #a8a8a8"></div>
<div class="a" style="left:1653px;top:699px;width:28px;height:157px;background:#fcfcfc;border-right:1px solid #a8a8a8;border-bottom:1px solid #a8a8a8"></div>
<div class="a" style="left:1571px;top:90px;width:24px;height:23px;background:#cce8ff;border:1px solid #99d1ff"></div>
<div class="a" style="left:1599px;top:522px;width:23px;height:21px;background:#cce8ff;border:1px solid #99d1ff"></div>
<div class="a" style="left:1599px;top:545px;width:23px;height:22px;background:#cce8ff;border:1px solid #99d1ff"></div>
<div class="a" style="left:1655px;top:711px;width:25px;height:22px;background:#cce8ff;border:1px solid #99d1ff"></div>
<div class="a" style="left:1546.0px;top:85px;width:2px;height:2px;background:#a8a8a8"></div>
<div class="a" style="left:1549.7px;top:85px;width:2px;height:2px;background:#a8a8a8"></div>
<div class="a" style="left:1553.4px;top:85px;width:2px;height:2px;background:#a8a8a8"></div>
<div class="a" style="left:1557.1px;top:85px;width:2px;height:2px;background:#a8a8a8"></div>
<div class="a" style="left:1560.8px;top:85px;width:2px;height:2px;background:#a8a8a8"></div>
<div class="a" style="left:1564.5px;top:85px;width:2px;height:2px;background:#a8a8a8"></div>
<div class="a" style="left:1546.0px;top:526px;width:2px;height:2px;background:#a8a8a8"></div>
<div class="a" style="left:1549.7px;top:526px;width:2px;height:2px;background:#a8a8a8"></div>
<div class="a" style="left:1553.4px;top:526px;width:2px;height:2px;background:#a8a8a8"></div>
<div class="a" style="left:1557.1px;top:526px;width:2px;height:2px;background:#a8a8a8"></div>
<div class="a" style="left:1560.8px;top:526px;width:2px;height:2px;background:#a8a8a8"></div>
<div class="a" style="left:1564.5px;top:526px;width:2px;height:2px;background:#a8a8a8"></div>
<div class="a" style="left:1573.0px;top:85px;width:2px;height:2px;background:#a8a8a8"></div>
<div class="a" style="left:1576.7px;top:85px;width:2px;height:2px;background:#a8a8a8"></div>
<div class="a" style="left:1580.4px;top:85px;width:2px;height:2px;background:#a8a8a8"></div>
<div class="a" style="left:1584.1px;top:85px;width:2px;height:2px;background:#a8a8a8"></div>
<div class="a" style="left:1587.8px;top:85px;width:2px;height:2px;background:#a8a8a8"></div>
<div class="a" style="left:1591.5px;top:85px;width:2px;height:2px;background:#a8a8a8"></div>
<div class="a" style="left:1573.0px;top:537px;width:2px;height:2px;background:#a8a8a8"></div>
<div class="a" style="left:1576.7px;top:537px;width:2px;height:2px;background:#a8a8a8"></div>
<div class="a" style="left:1580.4px;top:537px;width:2px;height:2px;background:#a8a8a8"></div>
<div class="a" style="left:1584.1px;top:537px;width:2px;height:2px;background:#a8a8a8"></div>
<div class="a" style="left:1587.8px;top:537px;width:2px;height:2px;background:#a8a8a8"></div>
<div class="a" style="left:1591.5px;top:537px;width:2px;height:2px;background:#a8a8a8"></div>
<div class="a" style="left:1601.0px;top:88px;width:2px;height:2px;background:#a8a8a8"></div>
<div class="a" style="left:1604.7px;top:88px;width:2px;height:2px;background:#a8a8a8"></div>
<div class="a" style="left:1608.4px;top:88px;width:2px;height:2px;background:#a8a8a8"></div>
<div class="a" style="left:1612.1px;top:88px;width:2px;height:2px;background:#a8a8a8"></div>
<div class="a" style="left:1615.8px;top:88px;width:2px;height:2px;background:#a8a8a8"></div>
<div class="a" style="left:1619.5px;top:88px;width:2px;height:2px;background:#a8a8a8"></div>
<div class="a" style="left:1601.0px;top:203px;width:2px;height:2px;background:#a8a8a8"></div>
<div class="a" style="left:1604.7px;top:203px;width:2px;height:2px;background:#a8a8a8"></div>
<div class="a" style="left:1608.4px;top:203px;width:2px;height:2px;background:#a8a8a8"></div>
<div class="a" style="left:1612.1px;top:203px;width:2px;height:2px;background:#a8a8a8"></div>
<div class="a" style="left:1615.8px;top:203px;width:2px;height:2px;background:#a8a8a8"></div>
<div class="a" style="left:1619.5px;top:203px;width:2px;height:2px;background:#a8a8a8"></div>
<div class="a" style="left:1629.0px;top:85px;width:2px;height:2px;background:#a8a8a8"></div>
<div class="a" style="left:1632.7px;top:85px;width:2px;height:2px;background:#a8a8a8"></div>
<div class="a" style="left:1636.4px;top:85px;width:2px;height:2px;background:#a8a8a8"></div>
<div class="a" style="left:1640.1px;top:85px;width:2px;height:2px;background:#a8a8a8"></div>
<div class="a" style="left:1643.8px;top:85px;width:2px;height:2px;background:#a8a8a8"></div>
<div class="a" style="left:1647.5px;top:85px;width:2px;height:2px;background:#a8a8a8"></div>
<div class="a" style="left:1629.0px;top:656px;width:2px;height:2px;background:#a8a8a8"></div>
<div class="a" style="left:1632.7px;top:656px;width:2px;height:2px;background:#a8a8a8"></div>
<div class="a" style="left:1636.4px;top:656px;width:2px;height:2px;background:#a8a8a8"></div>
<div class="a" style="left:1640.1px;top:656px;width:2px;height:2px;background:#a8a8a8"></div>
<div class="a" style="left:1643.8px;top:656px;width:2px;height:2px;background:#a8a8a8"></div>
<div class="a" style="left:1647.5px;top:656px;width:2px;height:2px;background:#a8a8a8"></div>
<div class="a" style="left:1657.0px;top:85px;width:2px;height:2px;background:#a8a8a8"></div>
<div class="a" style="left:1660.7px;top:85px;width:2px;height:2px;background:#a8a8a8"></div>
<div class="a" style="left:1664.4px;top:85px;width:2px;height:2px;background:#a8a8a8"></div>
<div class="a" style="left:1668.1px;top:85px;width:2px;height:2px;background:#a8a8a8"></div>
<div class="a" style="left:1671.8px;top:85px;width:2px;height:2px;background:#a8a8a8"></div>
<div class="a" style="left:1675.5px;top:85px;width:2px;height:2px;background:#a8a8a8"></div>
<div class="a" style="left:1657.0px;top:589px;width:2px;height:2px;background:#a8a8a8"></div>
<div class="a" style="left:1660.7px;top:589px;width:2px;height:2px;background:#a8a8a8"></div>
<div class="a" style="left:1664.4px;top:589px;width:2px;height:2px;background:#a8a8a8"></div>
<div class="a" style="left:1668.1px;top:589px;width:2px;height:2px;background:#a8a8a8"></div>
<div class="a" style="left:1671.8px;top:589px;width:2px;height:2px;background:#a8a8a8"></div>
<div class="a" style="left:1675.5px;top:589px;width:2px;height:2px;background:#a8a8a8"></div>
<div class="a" style="left:1657.0px;top:704px;width:2px;height:2px;background:#a8a8a8"></div>
<div class="a" style="left:1660.7px;top:704px;width:2px;height:2px;background:#a8a8a8"></div>
<div class="a" style="left:1664.4px;top:704px;width:2px;height:2px;background:#a8a8a8"></div>
<div class="a" style="left:1668.1px;top:704px;width:2px;height:2px;background:#a8a8a8"></div>
<div class="a" style="left:1671.8px;top:704px;width:2px;height:2px;background:#a8a8a8"></div>
<div class="a" style="left:1675.5px;top:704px;width:2px;height:2px;background:#a8a8a8"></div>
<div class="a" style="left:1545px;top:117px;width:20px;height:1px;background:#909090"></div>
<div class="a" style="left:1545px;top:149px;width:20px;height:1px;background:#909090"></div>
<div class="a" style="left:1545px;top:229px;width:20px;height:1px;background:#909090"></div>
<div class="a" style="left:1545px;top:429px;width:20px;height:1px;background:#909090"></div>
<div class="a" style="left:1545px;top:630px;width:20px;height:1px;background:#909090"></div>
<div class="a" style="left:1545px;top:735px;width:20px;height:1px;background:#909090"></div>
<div class="a" style="left:1545px;top:790px;width:20px;height:1px;background:#909090"></div>
<div class="a" style="left:1572px;top:116px;width:21px;height:1px;background:#909090"></div>
<div class="a" style="left:1572px;top:268px;width:21px;height:1px;background:#909090"></div>
<div class="a" style="left:1572px;top:324px;width:21px;height:1px;background:#909090"></div>
<div class="a" style="left:1572px;top:428px;width:21px;height:1px;background:#909090"></div>
<div class="a" style="left:1572px;top:592px;width:21px;height:1px;background:#909090"></div>
<div class="a" style="left:1572px;top:745px;width:21px;height:1px;background:#909090"></div>
<div class="a" style="left:1572px;top:848px;width:21px;height:1px;background:#909090"></div>
<div class="a" style="left:1572px;top:952px;width:21px;height:1px;background:#909090"></div>
<div class="a" style="left:1600px;top:143px;width:21px;height:1px;background:#909090"></div>
<div class="a" style="left:1600px;top:331px;width:21px;height:1px;background:#909090"></div>
<div class="a" style="left:1600px;top:387px;width:21px;height:1px;background:#909090"></div>
<div class="a" style="left:1600px;top:514px;width:21px;height:1px;background:#909090"></div>
<div class="a" style="left:1600px;top:715px;width:21px;height:1px;background:#909090"></div>
<div class="a" style="left:1628px;top:212px;width:21px;height:1px;background:#909090"></div>
<div class="a" style="left:1628px;top:364px;width:21px;height:1px;background:#909090"></div>
<div class="a" style="left:1628px;top:395px;width:21px;height:1px;background:#909090"></div>
<div class="a" style="left:1628px;top:476px;width:21px;height:1px;background:#909090"></div>
<div class="a" style="left:1628px;top:688px;width:21px;height:1px;background:#909090"></div>
<div class="a" style="left:1628px;top:768px;width:21px;height:1px;background:#909090"></div>
<div class="a" style="left:1656px;top:140px;width:21px;height:1px;background:#909090"></div>
<div class="a" style="left:1656px;top:172px;width:21px;height:1px;background:#909090"></div>
<div class="a" style="left:1656px;top:252px;width:21px;height:1px;background:#909090"></div>
<div class="a" style="left:1656px;top:284px;width:21px;height:1px;background:#909090"></div>
<div class="a" style="left:1656px;top:364px;width:21px;height:1px;background:#909090"></div>
<div class="a" style="left:1656px;top:420px;width:21px;height:1px;background:#909090"></div>
<div class="a" style="left:1656px;top:644px;width:21px;height:1px;background:#909090"></div>
<svg class="a" style="left:1546px;top:96px" width="16" height="16" viewBox="0 0 16 16"><rect x="1.5" y="2.5" width="13" height="11" rx="1.5" fill="none" stroke="#222" stroke-dasharray="1.6 1.2"/><rect x="3" y="4" width="5" height="4" fill="#f2cf50"/><path d="M4 5.5h3M4 7h3" stroke="#8a6a00" stroke-width=".6"/><rect x="8" y="8" width="5.5" height="5" fill="#4fb8c8"/><path d="M10.7 8.8v3.6M8.9 10.6h3.6" stroke="#000" stroke-width=".9"/></svg>
<svg class="a" style="left:1546px;top:127px" width="16" height="16" viewBox="0 0 16 16"><rect x="1.5" y="2.5" width="12" height="10" fill="#f6e0d0" stroke="#6b6b6b"/><path d="M4 3v9M7 3v9M10 3v9M2 6h11M2 9h11" stroke="#e0702a" stroke-width="1"/><path d="M9 2h6l-3 4z" fill="#d42a2a"/><circle cx="12" cy="11" r="3" fill="#fff" stroke="#2f6fba" stroke-width="1.4"/></svg>
<svg class="a" style="left:1546px;top:158px" width="16" height="16" viewBox="0 0 16 16"><rect x="1.5" y="2.5" width="13" height="12" rx="1.5" fill="none" stroke="#222" stroke-dasharray="1.6 1.2"/><circle cx="5.5" cy="6" r="1.8" fill="none" stroke="#2f6fba" stroke-width="1.2"/><circle cx="10.5" cy="6" r="1.8" fill="none" stroke="#2f6fba" stroke-width="1.2"/><circle cx="8" cy="10.5" r="1.8" fill="none" stroke="#2f6fba" stroke-width="1.2"/><path d="M5.5 2v2M10.5 2v2M8 12.5v2" stroke="#2f6fba"/></svg>
<svg class="a" style="left:1546px;top:182px" width="16" height="16" viewBox="0 0 16 16"><rect x="1.5" y="2.5" width="13" height="12" rx="1.5" fill="none" stroke="#222" stroke-dasharray="1.6 1.2"/><circle cx="8" cy="9" r="2.6" fill="none" stroke="#2f6fba" stroke-width="1.6"/><path d="M8 2v4" stroke="#d42a2a" stroke-width="1.4"/><path d="M6 2h4" stroke="#d42a2a" stroke-width="1.4"/></svg>
<svg class="a" style="left:1546px;top:207px" width="16" height="16" viewBox="0 0 16 16"><rect x="1.5" y="2.5" width="13" height="12" rx="1.5" fill="none" stroke="#222" stroke-dasharray="1.6 1.2"/><circle cx="8" cy="8.5" r="2.6" fill="none" stroke="#2f6fba" stroke-width="1.6"/><path d="M8 2v3.5M8 11.5v4" stroke="#d42a2a" stroke-width="1.4"/><path d="M6 2h4M6 15h4" stroke="#d42a2a" stroke-width="1.2"/></svg>
<svg class="a" style="left:1546px;top:237px" width="16" height="16" viewBox="0 0 16 16"><path d="M2 5h12M2 11h12" stroke="#6b6b6b" stroke-width=".8"/><circle cx="3.5" cy="3.5" r="1.4" fill="#e0702a"/><path d="M3.5 3.5v2.5" stroke="#e0702a"/><circle cx="3.5" cy="10" r="1.4" fill="#e0702a"/><path d="M3.5 10v2.5" stroke="#e0702a"/><circle cx="8" cy="3.5" r="1.4" fill="#e0702a"/><path d="M8 3.5v2.5" stroke="#e0702a"/><circle cx="8" cy="10" r="1.4" fill="#e0702a"/><path d="M8 10v2.5" stroke="#e0702a"/><circle cx="12.5" cy="3.5" r="1.4" fill="#e0702a"/><path d="M12.5 3.5v2.5" stroke="#e0702a"/><circle cx="12.5" cy="10" r="1.4" fill="#e0702a"/><path d="M12.5 10v2.5" stroke="#e0702a"/></svg>
<svg class="a" style="left:1546px;top:263px" width="16" height="16" viewBox="0 0 16 16"><rect x="1.5" y="1.5" width="7" height="6" fill="#f6e0d0" stroke="#6b6b6b"/><path d="M1.5 4.5h7M4.5 1.5v6" stroke="#e0702a" stroke-width=".8"/><rect x="2" y="10" width="2" height="5" fill="#6b6b6b"/><rect x="2.3" y="10.5" width="1.4" height="1.6" fill="#d42a2a"/><rect x="2.3" y="12.8" width="1.4" height="1.6" fill="#3a3"/><path d="M8 6h8l-4 4z" fill="#d42a2a"/><circle cx="12" cy="12.5" r="2.6" fill="#fff" stroke="#2f6fba" stroke-width="1.4"/></svg>
<svg class="a" style="left:1546px;top:287px" width="16" height="16" viewBox="0 0 16 16"><rect x="1.5" y="1.5" width="7" height="6" fill="#f6e0d0" stroke="#6b6b6b"/><path d="M1.5 4.5h7M4.5 1.5v6" stroke="#e0702a" stroke-width=".8"/><rect x="2" y="10" width="2" height="5" fill="#6b6b6b"/><rect x="2.3" y="10.5" width="1.4" height="1.6" fill="#d42a2a"/><circle cx="12" cy="6" r="2.6" fill="#fff" stroke="#2f6fba" stroke-width="1.4"/><path d="M8 16h8l-4-5z" fill="#d42a2a"/></svg>
<svg class="a" style="left:1546px;top:312px" width="16" height="16" viewBox="0 0 16 16"><rect x="1.5" y="1.5" width="7" height="6" fill="#f6e0d0" stroke="#6b6b6b"/><path d="M1.5 4.5h7M4.5 1.5v6" stroke="#e0702a" stroke-width=".8"/><path d="M2 9v6h5" fill="none" stroke="#6b6b6b" stroke-width="1.3"/><path d="M3 14 Q6 13 6 9" fill="none" stroke="#e0702a"/><path d="M8 6h8l-4 4z" fill="#d42a2a"/><circle cx="12" cy="12.5" r="2.6" fill="#fff" stroke="#2f6fba" stroke-width="1.4"/></svg>
<svg class="a" style="left:1546px;top:334px" width="16" height="16" viewBox="0 0 16 16"><rect x="1.5" y="1.5" width="7" height="6" fill="#f6e0d0" stroke="#6b6b6b"/><path d="M1.5 4.5h7M4.5 1.5v6" stroke="#e0702a" stroke-width=".8"/><path d="M2 9v6h5" fill="none" stroke="#6b6b6b" stroke-width="1.3"/><circle cx="12" cy="6" r="2.6" fill="#fff" stroke="#2f6fba" stroke-width="1.4"/><path d="M8 16h8l-4-5z" fill="#d42a2a"/></svg>
<svg class="a" style="left:1546px;top:358px" width="16" height="16" viewBox="0 0 16 16"><rect x="1.5" y="1.5" width="13" height="13" fill="#fff" stroke="#e0702a" stroke-width="1.4"/><path d="M5 2h6l-3 4z" fill="#d42a2a"/><path d="M8 6v2" stroke="#d42a2a"/><circle cx="8" cy="10.5" r="2.4" fill="#fff" stroke="#2f6fba" stroke-width="1.4"/></svg>
<svg class="a" style="left:1546px;top:383px" width="16" height="16" viewBox="0 0 16 16"><rect x="1.5" y="1.5" width="13" height="13" fill="#fff" stroke="#e0702a" stroke-width="1.4"/><path d="M5 8h6l-3-4z" fill="#d42a2a"/><circle cx="8" cy="11" r="2.4" fill="#fff" stroke="#2f6fba" stroke-width="1.4"/></svg>
<svg class="a" style="left:1546px;top:406px" width="16" height="16" viewBox="0 0 16 16"><path d="M1 4h7M1 6h7" stroke="#2e9a5e" stroke-width="1.2"/><path d="M2 3l1 2M4 3l1 2M6 3l1 2" stroke="#2e9a5e"/><path d="M8 6h8l-4 4z" fill="#d42a2a"/><circle cx="12" cy="12.5" r="2.6" fill="#fff" stroke="#2f6fba" stroke-width="1.4"/></svg>
<svg class="a" style="left:1546px;top:437px" width="16" height="16" viewBox="0 0 16 16"><path d="M1.5 2.5h13v8l-4 4h-9z" fill="#d0d0d0" stroke="#c0c0c0"/><rect x="4" y="5" width="3" height="3" fill="#a0a0a0"/><rect x="8" y="5" width="3" height="3" fill="#a0a0a0"/><rect x="4" y="9" width="3" height="3" fill="#a0a0a0"/></svg>
<svg class="a" style="left:1546px;top:462px" width="16" height="16" viewBox="0 0 16 16"><rect x="1.5" y="1.5" width="13" height="13" fill="#b0b0b0"/><path d="M1 9L9 1M4 15L15 4M9 15L15 9" stroke="#dadada" stroke-width="1.6"/></svg>
<svg class="a" style="left:1546px;top:486px" width="16" height="16" viewBox="0 0 16 16"><rect x="2.5" y="4.5" width="12" height="10" rx="1" fill="none" stroke="#b8b8b8" stroke-dasharray="1.6 1.2"/><path d="M4 1v5M1.5 3.5h5M2 1.5l4 4M6 1.5l-4 4" stroke="#c8c8c8"/></svg>
<svg class="a" style="left:1546px;top:537px" width="16" height="16" viewBox="0 0 16 16"><path d="M3 14V4H13" fill="none" stroke="#2f6fba" stroke-width="1.6"/><rect x="1.5" y="12.5" width="3" height="3" fill="#f0b400" stroke="#a07000" stroke-width=".6"/><rect x="11.5" y="2.5" width="3" height="3" fill="#f0b400" stroke="#a07000" stroke-width=".6"/></svg>
<svg class="a" style="left:1546px;top:561px" width="16" height="16" viewBox="0 0 16 16"><path d="M3 3H12V13" fill="none" stroke="#2f6fba" stroke-width="1.6"/><rect x="1.5" y="1.5" width="3" height="3" fill="#f0b400" stroke="#a07000" stroke-width=".6"/><rect x="10.5" y="11.5" width="3" height="3" fill="#f0b400" stroke="#a07000" stroke-width=".6"/></svg>
<svg class="a" style="left:1546px;top:583px" width="16" height="16" viewBox="0 0 16 16"><path d="M3 3V13H13" fill="none" stroke="#2f6fba" stroke-width="1.6"/><rect x="1.5" y="1.5" width="3" height="3" fill="#f0b400" stroke="#a07000" stroke-width=".6"/><rect x="11.5" y="11.5" width="3" height="3" fill="#f0b400" stroke="#a07000" stroke-width=".6"/></svg>
<svg class="a" style="left:1546px;top:607px" width="16" height="16" viewBox="0 0 16 16"><path d="M3 13H13V3" fill="none" stroke="#2f6fba" stroke-width="1.6"/><rect x="1.5" y="11.5" width="3" height="3" fill="#f0b400" stroke="#a07000" stroke-width=".6"/><rect x="11.5" y="1.5" width="3" height="3" fill="#f0b400" stroke="#a07000" stroke-width=".6"/></svg>
<svg class="a" style="left:1546px;top:639px" width="16" height="16" viewBox="0 0 16 16"><path d="M3 3L8 9L13 3M8 9V14" fill="none" stroke="#2f6fba" stroke-width="1.6"/><rect x="1.5" y="1.5" width="3" height="3" fill="#f0b400" stroke="#a07000" stroke-width=".6"/><rect x="11.5" y="1.5" width="3" height="3" fill="#f0b400" stroke="#a07000" stroke-width=".6"/><rect x="6.5" y="12.5" width="3" height="3" fill="#f0b400" stroke="#a07000" stroke-width=".6"/></svg>
<svg class="a" style="left:1546px;top:664px" width="16" height="16" viewBox="0 0 16 16"><path d="M3 3L8 9L13 14M8 9L3 14" fill="none" stroke="#2f6fba" stroke-width="1.6"/><rect x="1.5" y="1.5" width="3" height="3" fill="#f0b400" stroke="#a07000" stroke-width=".6"/><rect x="11.5" y="12.5" width="3" height="3" fill="#f0b400" stroke="#a07000" stroke-width=".6"/><rect x="1.5" y="12.5" width="3" height="3" fill="#f0b400" stroke="#a07000" stroke-width=".6"/></svg>
<svg class="a" style="left:1546px;top:687px" width="16" height="16" viewBox="0 0 16 16"><path d="M3 3V13L13 5" fill="none" stroke="#2f6fba" stroke-width="1.6"/><rect x="1.5" y="1.5" width="3" height="3" fill="#f0b400" stroke="#a07000" stroke-width=".6"/><rect x="1.5" y="11.5" width="3" height="3" fill="#f0b400" stroke="#a07000" stroke-width=".6"/><rect x="11.5" y="3.5" width="3" height="3" fill="#f0b400" stroke="#a07000" stroke-width=".6"/></svg>
<svg class="a" style="left:1546px;top:711px" width="16" height="16" viewBox="0 0 16 16"><path d="M3 13L9 13L13 3" fill="none" stroke="#2f6fba" stroke-width="1.6"/><rect x="1.5" y="11.5" width="3" height="3" fill="#f0b400" stroke="#a07000" stroke-width=".6"/><rect x="11.5" y="1.5" width="3" height="3" fill="#f0b400" stroke="#a07000" stroke-width=".6"/><rect x="7.5" y="11.5" width="3" height="3" fill="#f0b400" stroke="#a07000" stroke-width=".6"/></svg>
<svg class="a" style="left:1546px;top:743px" width="16" height="16" viewBox="0 0 16 16"><path d="M8 2V9L3 13M8 9L13 13M8 9H3M8 9H13" fill="none" stroke="#2f6fba" stroke-width="1.6"/><rect x="6.5" y="0.5" width="3" height="3" fill="#f0b400" stroke="#a07000" stroke-width=".6"/><rect x="1.5" y="11.5" width="3" height="3" fill="#f0b400" stroke="#a07000" stroke-width=".6"/><rect x="11.5" y="11.5" width="3" height="3" fill="#f0b400" stroke="#a07000" stroke-width=".6"/></svg>
<svg class="a" style="left:1546px;top:767px" width="16" height="16" viewBox="0 0 16 16"><path d="M3 5L8 9L8 4L13 13" fill="none" stroke="#2f6fba" stroke-width="1.6"/><rect x="1.5" y="3.5" width="3" height="3" fill="#f0b400" stroke="#a07000" stroke-width=".6"/><rect x="6.5" y="2.5" width="3" height="3" fill="#f0b400" stroke="#a07000" stroke-width=".6"/><rect x="11.5" y="11.5" width="3" height="3" fill="#f0b400" stroke="#a07000" stroke-width=".6"/></svg>
<svg class="a" style="left:1546px;top:800px" width="16" height="16" viewBox="0 0 16 16"><path d="M2 8H10" stroke="#2f6fba" stroke-width="1.6"/><path d="M9 4L14 8L9 12Z" fill="#2f6fba"/><rect x="1.5" y="6.5" width="3" height="3" fill="#f0b400" stroke="#a07000" stroke-width=".6"/><rect x="12.5" y="6.5" width="3" height="3" fill="#f0b400" stroke="#a07000" stroke-width=".6"/></svg>
<svg class="a" style="left:1546px;top:824px" width="16" height="16" viewBox="0 0 16 16"><path d="M3 3L13 13" stroke="#2f6fba" stroke-width="2"/><rect x="1.5" y="1.5" width="3" height="3" fill="#f0b400" stroke="#a07000" stroke-width=".6"/><rect x="11.5" y="11.5" width="3" height="3" fill="#f0b400" stroke="#a07000" stroke-width=".6"/></svg>
<svg class="a" style="left:1574px;top:93px" width="16" height="16" viewBox="0 0 16 16"><path d="M4 1.5V13L7 10L9.5 15L11.5 14L9 9H13Z" fill="#fff" stroke="#888" stroke-width="1"/></svg>
<svg class="a" style="left:1574px;top:125px" width="16" height="16" viewBox="0 0 16 16"><rect x="1.5" y="8.5" width="7" height="5" fill="#fff" stroke="#6b6b6b"/><rect x="10.5" y="6.5" width="4" height="7" fill="none" stroke="#222" stroke-dasharray="1.6 1.2"/><path d="M4 8 Q4 3 9 3" fill="none" stroke="#2f6fba" stroke-width="1.4"/><path d="M8 1L11 3L8 5Z" fill="#2f6fba"/></svg>
<svg class="a" style="left:1574px;top:150px" width="16" height="16" viewBox="0 0 16 16"><path d="M7 3L2 13H7Z" fill="#d8d8d8" stroke="#6b6b6b"/><path d="M9 3L14 13H9Z" fill="none" stroke="#6b6b6b" stroke-dasharray="1.6 1.2"/><path d="M8 1V15" stroke="#2f6fba" stroke-width="1.2"/></svg>
<svg class="a" style="left:1574px;top:174px" width="16" height="16" viewBox="0 0 16 16"><rect x="1.5" y="1.5" width="13" height="13" rx="1" fill="none" stroke="#222" stroke-dasharray="1.6 1.2"/><rect x="2.5" y="6.5" width="8" height="8" fill="#cfe3f5" stroke="#6b6b6b"/><path d="M8 8L13 3M10 3H13V6" stroke="#2f6fba" stroke-width="1.2" fill="none"/></svg>
<svg class="a" style="left:1574px;top:197px" width="16" height="16" viewBox="0 0 16 16"><rect x="1.5" y="2.5" width="6" height="11" fill="#fff" stroke="#6b6b6b"/><rect x="3" y="4" width="3" height="8" fill="#cfe3f5"/><rect x="9.5" y="2.5" width="5" height="11" fill="none" stroke="#222" stroke-dasharray="1.6 1.2"/><path d="M7 8H13M11 6L13 8L11 10" stroke="#2f6fba" stroke-width="1.2" fill="none"/></svg>
<svg class="a" style="left:1574px;top:222px" width="16" height="16" viewBox="0 0 16 16"><rect x="1.5" y="2.5" width="5" height="11" fill="#fff" stroke="#6b6b6b"/><rect x="3" y="4" width="2" height="8" fill="#cfe3f5"/><rect x="9.5" y="2.5" width="5" height="11" fill="#fff" stroke="#6b6b6b"/><rect x="11" y="4" width="2" height="8" fill="#cfe3f5"/><path d="M5 8H9M7.5 6.5L9 8L7.5 9.5" stroke="#2f6fba" stroke-width="1.2" fill="none"/></svg>
<svg class="a" style="left:1574px;top:246px" width="16" height="16" viewBox="0 0 16 16"><rect x="1.5" y="6.5" width="9" height="8" fill="#cfe3f5" stroke="#6b6b6b"/><path d="M1.5 5.5L14.5 1.5V14.5" fill="none" stroke="#222" stroke-dasharray="1.6 1.2"/><path d="M7 9L12 4M9.5 4H12V6.5" stroke="#2f6fba" stroke-width="1.2" fill="none"/></svg>
<svg class="a" style="left:1574px;top:277px" width="16" height="16" viewBox="0 0 16 16"><rect x="2" y="2" width="8" height="8" fill="#f2b050"/><rect x="6" y="6" width="8" height="8" fill="#e8a850"/><path d="M14 10V14H10" stroke="#9a9a9a" stroke-width="2" fill="none"/><path d="M2 6V2H6" stroke="#9a9a9a" stroke-width="2" fill="none"/></svg>
<svg class="a" style="left:1574px;top:300px" width="16" height="16" viewBox="0 0 16 16"><rect x="2" y="2" width="6" height="6" fill="#9a9a9a"/><rect x="5" y="5" width="8" height="8" fill="#f2b050"/><rect x="10" y="10" width="5" height="5" fill="#9a9a9a"/></svg>
<svg class="a" style="left:1574px;top:333px" width="16" height="16" viewBox="0 0 16 16"><rect x="1.5" y="1.5" width="13" height="13" fill="none" stroke="#000" stroke-dasharray="1.6 1.2"/><rect x="3" y="4" width="10" height="8" fill="#e8b050"/><rect x="3" y="4" width="5" height="4" fill="#888"/><circle cx="9" cy="10" r="3.5" fill="#2e9a5e"/><path d="M7 10L8.5 11.5L11 9" stroke="#fff" fill="none" stroke-width="1.1"/></svg>
<svg class="a" style="left:1574px;top:358px" width="16" height="16" viewBox="0 0 16 16"><rect x="1.5" y="1.5" width="13" height="13" fill="none" stroke="#999" stroke-dasharray="1.6 1.2"/><rect x="3" y="3" width="8" height="8" fill="#c8c8c8"/><rect x="6" y="6" width="7" height="7" fill="#d8d8d8"/></svg>
<svg class="a" style="left:1574px;top:382px" width="16" height="16" viewBox="0 0 16 16"><rect x="1.5" y="1.5" width="13" height="13" fill="none" stroke="#999" stroke-dasharray="1.6 1.2"/><rect x="3" y="5" width="10" height="6" rx="3" fill="#d0d0d0" stroke="#bbb"/></svg>
<svg class="a" style="left:1574px;top:405px" width="16" height="16" viewBox="0 0 16 16"><rect x="1.5" y="1.5" width="13" height="13" fill="none" stroke="#999" stroke-dasharray="1.6 1.2"/><path d="M6 3h4v3h3v4h-3v3H6v-3H3V6h3z" fill="#c8c8c8"/></svg>
<svg class="a" style="left:1574px;top:437px" width="16" height="16" viewBox="0 0 16 16"><path d="M1 10H15" stroke="#8a3a10" stroke-width="1.6"/><path d="M7 6V15" stroke="#8a3a10" stroke-width="1.6"/><path d="M5 1L10 8M10 1L5 8" stroke="#6b6b6b" stroke-width="1.3"/><circle cx="10.5" cy="3" r="1.5" fill="#2f6fba"/></svg>
<svg class="a" style="left:1574px;top:462px" width="16" height="16" viewBox="0 0 16 16"><path d="M1 5H15" stroke="#8a3a10" stroke-width="1.6"/><circle cx="4" cy="5" r="1.3" fill="#d42a2a"/><circle cx="12" cy="5" r="1.3" fill="#d42a2a"/><path d="M8 6V15M4.5 10L8 6.5L11.5 10" stroke="#2f6fba" stroke-width="1.8" fill="none"/></svg>
<svg class="a" style="left:1574px;top:486px" width="16" height="16" viewBox="0 0 16 16"><path d="M3.5 4.5V1.5H13.5" fill="none" stroke="#000" stroke-dasharray="1.6 1.2"/><path d="M4 15V9Q4 4 9 4H14" fill="none" stroke="#2f6fba" stroke-width="2"/></svg>
<svg class="a" style="left:1574px;top:509px" width="16" height="16" viewBox="0 0 16 16"><path d="M3.5 4.5V1.5H13.5" fill="none" stroke="#000" stroke-dasharray="1.6 1.2"/><path d="M4 15V10L9 4H14" fill="none" stroke="#2f6fba" stroke-width="2"/></svg>
<svg class="a" style="left:1574px;top:544px" width="16" height="16" viewBox="0 0 16 16"><rect x="1" y="2" width="3" height="12" fill="#2f6fba"/><rect x="5.5" y="9.5" width="5" height="4" fill="#cfe3f5" stroke="#2f6fba"/><rect x="9" y="2" width="6" height="6" rx="1.5" fill="#2e9a5e"/><path d="M10.5 3.5L13.5 6.5M13.5 4.5V6.5H11.5" stroke="#fff" fill="none"/></svg>
<svg class="a" style="left:1574px;top:568px" width="16" height="16" viewBox="0 0 16 16"><rect x="1" y="2" width="3" height="12" fill="#2f6fba"/><rect x="5.5" y="9.5" width="5" height="4" fill="#cfe3f5" stroke="#2f6fba"/><rect x="9" y="2" width="6" height="6" rx="1.5" fill="#8a4fb0"/><path d="M13.5 6.5L10.5 3.5M10.5 5.5V3.5H12.5" stroke="#fff" fill="none"/></svg>
<svg class="a" style="left:1574px;top:600px" width="16" height="16" viewBox="0 0 16 16"><path d="M5 1v7M1.5 4.5h7M2.5 2l5 5M7.5 2l-5 5" stroke="#f0b400" stroke-width="1.2"/><rect x="6.5" y="7.5" width="8" height="6" fill="#cfe3f5" stroke="#2f6fba"/><path d="M8 14.5v1M13 14.5v1" stroke="#d42a2a"/></svg>
<svg class="a" style="left:1574px;top:624px" width="16" height="16" viewBox="0 0 16 16"><rect x="1" y="1" width="7" height="7" rx="2" fill="#2e9a5e"/><path d="M3 3L6 6M6 4V6H4" stroke="#fff" fill="none"/><rect x="6.5" y="7.5" width="8" height="6" fill="#cfe3f5" stroke="#2f6fba"/><path d="M8 14.5v1M13 14.5v1" stroke="#d42a2a"/></svg>
<svg class="a" style="left:1574px;top:648px" width="16" height="16" viewBox="0 0 16 16"><rect x="8" y="1" width="7" height="7" rx="2" fill="#b8b8b8"/><rect x="1.5" y="7.5" width="8" height="6" fill="#e8e8e8" stroke="#c0c0c0"/></svg>
<svg class="a" style="left:1574px;top:672px" width="16" height="16" viewBox="0 0 16 16"><rect x="1.5" y="3.5" width="8" height="6" fill="#cfe3f5" stroke="#2f6fba"/><rect x="6.5" y="7.5" width="8" height="6" fill="#cfe3f5" stroke="#2f6fba"/><path d="M3 1.5v1M8 1.5v1M8 14.5v1M13 14.5v1" stroke="#d42a2a"/></svg>
<svg class="a" style="left:1574px;top:697px" width="16" height="16" viewBox="0 0 16 16"><rect x="3.5" y="3.5" width="8" height="6" fill="#eee" stroke="#c8c8c8"/><path d="M8 12L10.5 14.5L15 10" stroke="#a8a8a8" stroke-width="1.6" fill="none"/></svg>
<svg class="a" style="left:1574px;top:721px" width="16" height="16" viewBox="0 0 16 16"><rect x="1" y="2" width="3" height="12" fill="#2f6fba"/><rect x="5.5" y="9.5" width="5" height="4" fill="#cfe3f5" stroke="#2f6fba"/><path d="M9.5 1.5h4l2 2v7h-6z" fill="#fff" stroke="#6b6b6b"/><path d="M11 7l1.5 1.5L15 5" stroke="#d42a2a" fill="none"/></svg>
<svg class="a" style="left:1574px;top:753px" width="16" height="16" viewBox="0 0 16 16"><path d="M5 1v7M1.5 4.5h7M2.5 2l5 5M7.5 2l-5 5" stroke="#f0b400" stroke-width="1.2"/><rect x="1.5" y="8.5" width="13" height="6" fill="#cfe3f5" stroke="#2f6fba"/><path d="M3 12.5h10" stroke="#333" stroke-dasharray="1 1"/></svg>
<svg class="a" style="left:1574px;top:778px" width="16" height="16" viewBox="0 0 16 16"><rect x="1" y="1" width="7" height="7" rx="2" fill="#2e9a5e"/><path d="M3 3L6 6M6 4V6H4" stroke="#fff" fill="none"/><rect x="1.5" y="8.5" width="13" height="6" fill="#cfe3f5" stroke="#2f6fba"/><path d="M3 12.5h10" stroke="#333" stroke-dasharray="1 1"/></svg>
<svg class="a" style="left:1574px;top:802px" width="16" height="16" viewBox="0 0 16 16"><rect x="8" y="1" width="7" height="7" rx="2" fill="#b8b8b8"/><rect x="1.5" y="8.5" width="13" height="6" fill="#e0e0e0" stroke="#c0c0c0"/><path d="M3 12.5h10" stroke="#999" stroke-dasharray="1 1"/></svg>
<svg class="a" style="left:1574px;top:826px" width="16" height="16" viewBox="0 0 16 16"><rect x="1.5" y="2.5" width="13" height="5" fill="none" stroke="#2f6fba" stroke-dasharray="1.6 1.2"/><rect x="1.5" y="8.5" width="13" height="6" fill="#cfe3f5" stroke="#2f6fba"/><path d="M3 12.5h10" stroke="#333" stroke-dasharray="1 1"/></svg>
<svg class="a" style="left:1574px;top:858px" width="16" height="16" viewBox="0 0 16 16"><path d="M4 1v7M0.5 4.5h7M1.5 2l5 5M6.5 2l-5 5" stroke="#f0b400" stroke-width="1.2"/><rect x="4.5" y="3.5" width="10" height="12" fill="#fff" stroke="#6b6b6b"/><path d="M9 6h4M6 10h7M6 12h7" stroke="#2f6fba" stroke-width="1.2"/></svg>
<svg class="a" style="left:1574px;top:881px" width="16" height="16" viewBox="0 0 16 16"><rect x="1.5" y="3.5" width="10" height="12" fill="#fff" stroke="#6b6b6b"/><rect x="3" y="6" width="4" height="3" fill="#cfe3f5"/><path d="M3 11h7M3 13h7" stroke="#2f6fba" stroke-width="1.2"/><rect x="9" y="1" width="6.5" height="6.5" rx="1.5" fill="#2e9a5e"/><path d="M10.5 2.5L13.5 5.5M13.5 3.5V5.5H11.5" stroke="#fff" fill="none"/></svg>
<svg class="a" style="left:1574px;top:905px" width="16" height="16" viewBox="0 0 16 16"><rect x="1.5" y="3.5" width="10" height="12" fill="#fff" stroke="#c0c0c0"/><path d="M3 7h7M3 11h7M3 13h7" stroke="#c8c8c8" stroke-width="1.2"/><rect x="9" y="1" width="6.5" height="6.5" rx="1.5" fill="#b8b8b8"/></svg>
<svg class="a" style="left:1574px;top:930px" width="16" height="16" viewBox="0 0 16 16"><rect x="1.5" y="1.5" width="8" height="9" fill="#fff" stroke="#aaa"/><path d="M3 3h5" stroke="#f0b400"/><path d="M3 5h5M3 7h5" stroke="#9ab"/><rect x="6.5" y="5.5" width="8" height="10" fill="#fff" stroke="#6b6b6b"/><path d="M8 7.5h5" stroke="#f0b400"/><rect x="8" y="9" width="3" height="2" fill="#8ab8e0"/><path d="M8 12.5h5" stroke="#2f6fba"/></svg>
<svg class="a" style="left:1574px;top:961px" width="16" height="16" viewBox="0 0 16 16"><rect x="1.5" y="1.5" width="5" height="4" fill="#cfe3f5" stroke="#2f6fba"/><path d="M2 0.5v1M6 0.5v1M2 6v1M6 6v1" stroke="#d42a2a"/><path d="M9 3h5" stroke="#f0b400"/><rect x="1.5" y="9.5" width="8" height="5" fill="#cfe3f5" stroke="#2f6fba"/><path d="M9 12 Q12 8 15 11M9 12 Q12 16 15 12" fill="none" stroke="#2e9a5e" stroke-width="1.1"/></svg>
<svg class="a" style="left:1602px;top:96px" width="16" height="16" viewBox="0 0 16 16"><rect x="3.5" y="4.5" width="9" height="7" fill="#cfe3f5" stroke="#2f6fba" stroke-width="1.2"/><path d="M5 2v2M11 2v2M5 12v2M11 12v2" stroke="#e0702a"/></svg>
<svg class="a" style="left:1602px;top:120px" width="16" height="16" viewBox="0 0 16 16"><rect x="5.5" y="6" width="5" height="4" fill="#cfe3f5" stroke="#2f6fba"/><path d="M5.5 8H3V4M10.5 8H13V4M3 8V12M13 8V12" stroke="#e0702a" fill="none"/><rect x="1" y="1.5" width="4" height="3" fill="#fff" stroke="#2f6fba"/><rect x="11" y="1.5" width="4" height="3" fill="#fff" stroke="#2f6fba"/><rect x="1" y="11.5" width="4" height="3" fill="#fff" stroke="#2f6fba"/><rect x="11" y="11.5" width="4" height="3" fill="#fff" stroke="#2f6fba"/><rect x="6" y="12" width="4" height="3" fill="#fff" stroke="#2f6fba"/></svg>
<svg class="a" style="left:1602px;top:151px" width="16" height="16" viewBox="0 0 16 16"><path d="M1 3H3.5L5 11H13.5L15 5H4" fill="none" stroke="#2f6fba" stroke-width="1.6"/><path d="M5 7h9" stroke="#2f6fba"/><circle cx="6" cy="13.5" r="1.4" fill="#2f6fba"/><circle cx="12" cy="13.5" r="1.4" fill="#2f6fba"/></svg>
<svg class="a" style="left:1602px;top:176px" width="16" height="16" viewBox="0 0 16 16"><path d="M1.5 1V15M14.5 1V15" stroke="#2e9a5e" stroke-width="1.6"/><text x="8" y="12.5" font-size="12" font-family="Liberation Serif" text-anchor="middle" fill="#222">T</text></svg>
<svg class="a" style="left:1602px;top:212px" width="16" height="16" viewBox="0 0 16 16"><path d="M2.5 8A5.5 5.5 0 0 1 12.5 4.5" fill="none" stroke="#2e9a5e" stroke-width="2.4"/><path d="M13.5 8A5.5 5.5 0 0 1 3.5 11.5" fill="none" stroke="#2e9a5e" stroke-width="2.4"/><path d="M10 1L15 3L12 7Z" fill="#2e9a5e"/><path d="M6 15L1 13L4 9Z" fill="#2e9a5e"/></svg>
<svg class="a" style="left:1602px;top:236px" width="16" height="16" viewBox="0 0 16 16"><circle cx="7" cy="7" r="5" fill="none" stroke="#6b6b6b" stroke-width="1.8"/><path d="M10.5 10.5L15 15" stroke="#6b6b6b" stroke-width="2.2"/><rect x="3.5" y="8.5" width="6" height="6" fill="#fff" stroke="#000" stroke-dasharray="1.6 1.2"/></svg>
<svg class="a" style="left:1602px;top:261px" width="16" height="16" viewBox="0 0 16 16"><circle cx="7" cy="7" r="5" fill="none" stroke="#6b6b6b" stroke-width="1.8"/><path d="M10.5 10.5L15 15" stroke="#6b6b6b" stroke-width="2.2"/><path d="M4 7H10M7 4V10" stroke="#2f6fba" stroke-width="1.6"/></svg>
<svg class="a" style="left:1602px;top:284px" width="16" height="16" viewBox="0 0 16 16"><circle cx="7" cy="7" r="5" fill="none" stroke="#6b6b6b" stroke-width="1.8"/><path d="M10.5 10.5L15 15" stroke="#6b6b6b" stroke-width="2.2"/><path d="M4 7H10" stroke="#2f6fba" stroke-width="1.6"/></svg>
<svg class="a" style="left:1602px;top:309px" width="16" height="16" viewBox="0 0 16 16"><circle cx="7" cy="7" r="5" fill="none" stroke="#6b6b6b" stroke-width="1.8"/><path d="M10.5 10.5L15 15" stroke="#6b6b6b" stroke-width="2.2"/><text x="1" y="15.5" font-size="6" font-weight="bold" fill="#2e9a5e" font-family="Liberation Sans">100</text></svg>
<svg class="a" style="left:1602px;top:341px" width="16" height="16" viewBox="0 0 16 16"><path d="M14 8H5" stroke="#2f6fba" stroke-width="2.6"/><path d="M8 2.5L2 8L8 13.5" fill="none" stroke="#2f6fba" stroke-width="2.6"/></svg>
<svg class="a" style="left:1602px;top:364px" width="16" height="16" viewBox="0 0 16 16"><path d="M2 8H11" stroke="#b8b8b8" stroke-width="2.6"/><path d="M8 2.5L14 8L8 13.5" fill="none" stroke="#b8b8b8" stroke-width="2.6"/></svg>
<svg class="a" style="left:1602px;top:398px" width="16" height="16" viewBox="0 0 16 16"><path d="M0.5 4.5H12M0.5 8.5H12M0.5 12.5H8M3.5 0.5V14M7.5 0.5V14M11 0.5V8" stroke="#505050" stroke-width="1.1"/><text x="8.3" y="16" font-size="9.5" font-weight="bold" fill="#b85020" font-family="Liberation Sans">A</text></svg>
<svg class="a" style="left:1602px;top:421px" width="16" height="16" viewBox="0 0 16 16"><path d="M0.5 4.5H12M0.5 8.5H12M0.5 12.5H8M3.5 0.5V14M7.5 0.5V14M11 0.5V8" stroke="#505050" stroke-width="1.1"/><text x="8.3" y="16" font-size="9.5" font-weight="bold" fill="#b85020" font-family="Liberation Sans">B</text></svg>
<svg class="a" style="left:1602px;top:446px" width="16" height="16" viewBox="0 0 16 16"><path d="M0.5 4.5H12M0.5 8.5H12M0.5 12.5H8M3.5 0.5V14M7.5 0.5V14M11 0.5V8" stroke="#505050" stroke-width="1.1"/><text x="8.3" y="16" font-size="9.5" font-weight="bold" fill="#b85020" font-family="Liberation Sans">C</text></svg>
<svg class="a" style="left:1602px;top:470px" width="16" height="16" viewBox="0 0 16 16"><path d="M0.5 4.5H12M0.5 8.5H12M0.5 12.5H8M3.5 0.5V14M7.5 0.5V14M11 0.5V8" stroke="#505050" stroke-width="1.1"/><text x="8.3" y="16" font-size="9.5" font-weight="bold" fill="#b85020" font-family="Liberation Sans">D</text></svg>
<svg class="a" style="left:1602px;top:492px" width="16" height="16" viewBox="0 0 16 16"><path d="M0.5 4.5H12M0.5 8.5H12M0.5 12.5H8M3.5 0.5V14M7.5 0.5V14M11 0.5V8" stroke="#505050" stroke-width="1.1"/><text x="8.3" y="16" font-size="9.5" font-weight="bold" fill="#b85020" font-family="Liberation Sans">E</text></svg>
<svg class="a" style="left:1602px;top:524px" width="16" height="16" viewBox="0 0 16 16"><path d="M1 5.5H15M1 10.5H15M5.5 1V15M10.5 1V15" stroke="#404040" stroke-width="1.3"/></svg>
<svg class="a" style="left:1602px;top:548px" width="16" height="16" viewBox="0 0 16 16"><path d="M1 4.5H6M10 4.5H15M1 11.5H6M10 11.5H15M4.5 1V6M4.5 10V15M11.5 1V6M11.5 10V15" stroke="#404040" stroke-width="1.2"/><circle cx="8" cy="8" r="2.2" fill="#e07020"/><circle cx="8" cy="8" r="0.9" fill="#000"/></svg>
<svg class="a" style="left:1602px;top:573px" width="16" height="16" viewBox="0 0 16 16"><rect x="3.5" y="3.5" width="9" height="9" fill="#f2b050" stroke="#000" stroke-width="1.2"/><path d="M1 3.5H15M1 12.5H15M3.5 1V15M12.5 1V15" stroke="#000" stroke-width="1.2"/></svg>
<svg class="a" style="left:1602px;top:597px" width="16" height="16" viewBox="0 0 16 16"><path d="M6 12V7A4 4 0 0 1 14 7V12" fill="none" stroke="#d42a2a" stroke-width="2.8"/><path d="M5 12h2M13 12h2" stroke="#666" stroke-width="2"/><circle cx="3" cy="13.5" r="1.8" fill="#2f6fba"/></svg>
<svg class="a" style="left:1602px;top:620px" width="16" height="16" viewBox="0 0 16 16"><path d="M1.5 1V14.5H15" fill="none" stroke="#2f6fba" stroke-width="1.2"/><path d="M6 12V7A4 4 0 0 1 14 7V12" fill="none" stroke="#d42a2a" stroke-width="2.6"/></svg>
<svg class="a" style="left:1602px;top:644px" width="16" height="16" viewBox="0 0 16 16"><rect x="4.5" y="5.5" width="7" height="5" fill="#cfe3f5" stroke="#2f6fba"/><path d="M4.5 8H1M11.5 8H15M6 5.5V2H10M10 10.5V14H6M8 2V0M8 14V16" stroke="#a02020" fill="none"/></svg>
<svg class="a" style="left:1602px;top:669px" width="16" height="16" viewBox="0 0 16 16"><rect x="1" y="3.5" width="12" height="9" fill="#fff" stroke="#6b6b6b"/><text x="1.8" y="11" font-size="7.5" font-weight="bold" fill="#e0a020" font-family="Liberation Sans">128</text><path d="M14.5 3V13M13 3H16M13 13H16" stroke="#000"/></svg>
<svg class="a" style="left:1602px;top:692px" width="16" height="16" viewBox="0 0 16 16"><rect x="1.5" y="4.5" width="13" height="7" fill="#cfe3f5" stroke="#2f6fba"/><path d="M3 8.5h10" stroke="#333" stroke-dasharray="1 1"/></svg>
<svg class="a" style="left:1602px;top:726px" width="16" height="16" viewBox="0 0 16 16"><path d="M1 3H15M1 13H15" stroke="#999"/><path d="M1 6H15M1 10H15" stroke="#e07070"/><path d="M4 8Q7 3 9 8T14 8" fill="none" stroke="#e0702a" stroke-width="1.3"/></svg>
<svg class="a" style="left:1602px;top:751px" width="16" height="16" viewBox="0 0 16 16"><path d="M1 3H15M1 6H6M1 9H6M1 12H6" stroke="#999"/><path d="M1 6H5" stroke="#d42a2a"/><path d="M7 14A7 7 0 0 1 14 7M9 14A5 5 0 0 1 14 9M11 14A3 3 0 0 1 14 11" fill="none" stroke="#222" stroke-width="1.4"/></svg>
<svg class="a" style="left:1602px;top:774px" width="16" height="16" viewBox="0 0 16 16"><path d="M1 3H15M1 9H15M1 12H15" stroke="#999"/><path d="M1 6H15" stroke="#d42a2a"/><circle cx="6" cy="5.5" r="2" fill="#2f6fba"/><circle cx="6" cy="10.5" r="2" fill="#2f6fba"/><circle cx="10.5" cy="5.5" r="2" fill="#2f6fba"/><circle cx="10.5" cy="10.5" r="2" fill="#2f6fba"/><path d="M6 5.5L10.5 10.5M10.5 5.5L6 10.5" stroke="#2f6fba" stroke-width="1.5"/></svg>
<svg class="a" style="left:1630px;top:93px" width="16" height="16" viewBox="0 0 16 16"><path d="M2 14L14 2" stroke="#6b6b6b" stroke-width="2.6"/></svg>
<svg class="a" style="left:1630px;top:118px" width="16" height="16" viewBox="0 0 16 16"><path d="M2 15V3L8 10L14 3" fill="none" stroke="#6b6b6b" stroke-width="2.2"/></svg>
<svg class="a" style="left:1630px;top:142px" width="16" height="16" viewBox="0 0 16 16"><path d="M2 5L9 2H14Q12 8 14 14H6L2 10Z" fill="none" stroke="#6b6b6b" stroke-width="2"/></svg>
<svg class="a" style="left:1630px;top:166px" width="16" height="16" viewBox="0 0 16 16"><rect x="2" y="3" width="12" height="10" fill="none" stroke="#6b6b6b" stroke-width="1.8"/></svg>
<svg class="a" style="left:1630px;top:190px" width="16" height="16" viewBox="0 0 16 16"><rect x="2" y="2" width="12" height="12" fill="none" stroke="#6b6b6b" stroke-width="1.8"/><circle cx="8" cy="9" r="1.3" fill="none" stroke="#2f6fba"/><circle cx="11.5" cy="9" r="1.3" fill="none" stroke="#2f6fba"/><path d="M9 9h1.5" stroke="#2f6fba"/></svg>
<svg class="a" style="left:1630px;top:221px" width="16" height="16" viewBox="0 0 16 16"><circle cx="8" cy="8" r="6" fill="none" stroke="#6b6b6b" stroke-width="2"/></svg>
<svg class="a" style="left:1630px;top:246px" width="16" height="16" viewBox="0 0 16 16"><circle cx="8" cy="8" r="6" fill="none" stroke="#6b6b6b" stroke-width="2"/><circle cx="3.5" cy="4" r="1.3" fill="#fff" stroke="#2f6fba"/><circle cx="12.5" cy="4" r="1.3" fill="#fff" stroke="#2f6fba"/><circle cx="3.5" cy="12.5" r="1.3" fill="#fff" stroke="#2f6fba"/><circle cx="12.5" cy="12" r="1.3" fill="#fff" stroke="#2f6fba"/></svg>
<svg class="a" style="left:1630px;top:269px" width="16" height="16" viewBox="0 0 16 16"><path d="M12 3A6 6 0 1 0 12 13" fill="none" stroke="#6b6b6b" stroke-width="2"/><path d="M3 8L8 4L8 12Z" fill="none" stroke="#2f6fba"/><circle cx="8" cy="3" r="1.3" fill="#fff" stroke="#2f6fba"/><circle cx="3" cy="8" r="1.3" fill="#fff" stroke="#2f6fba"/><circle cx="8" cy="13" r="1.3" fill="#fff" stroke="#2f6fba"/></svg>
<svg class="a" style="left:1630px;top:292px" width="16" height="16" viewBox="0 0 16 16"><path d="M12 3A6 6 0 1 0 12 13" fill="none" stroke="#6b6b6b" stroke-width="2"/><circle cx="12" cy="3" r="1.3" fill="#fff" stroke="#2f6fba"/><circle cx="2" cy="8" r="1.3" fill="#fff" stroke="#2f6fba"/><circle cx="12" cy="13" r="1.3" fill="#fff" stroke="#2f6fba"/></svg>
<svg class="a" style="left:1630px;top:314px" width="16" height="16" viewBox="0 0 16 16"><circle cx="8" cy="8" r="6" fill="#d8d8d8" stroke="#6b6b6b" stroke-width="2"/><path d="M8 8L3 4M8 8L6 2" stroke="#2f6fba"/><circle cx="3" cy="4" r="1.3" fill="#fff" stroke="#2f6fba"/><circle cx="6" cy="2" r="1.3" fill="#fff" stroke="#2f6fba"/><circle cx="3" cy="12" r="1.3" fill="#fff" stroke="#2f6fba"/></svg>
<svg class="a" style="left:1630px;top:342px" width="16" height="16" viewBox="0 0 16 16"><ellipse cx="8" cy="8" rx="6.5" ry="4.5" fill="none" stroke="#6b6b6b" stroke-width="2"/></svg>
<svg class="a" style="left:1630px;top:373px" width="16" height="16" viewBox="0 0 16 16"><path d="M3 13Q4 9 7 8T13 3" fill="none" stroke="#6b6b6b" stroke-width="1.6"/><circle cx="3" cy="13" r="1.5" fill="#fff" stroke="#2f6fba"/><circle cx="13" cy="3" r="1.5" fill="#fff" stroke="#2f6fba"/></svg>
<svg class="a" style="left:1630px;top:405px" width="16" height="16" viewBox="0 0 16 16"><text x="8" y="15" font-size="18" font-family="Liberation Serif" text-anchor="middle" fill="#000">T</text></svg>
<svg class="a" style="left:1630px;top:430px" width="16" height="16" viewBox="0 0 16 16"><rect x="1.5" y="2.5" width="13" height="11" fill="#fff" stroke="#6b6b6b"/><path d="M3 12L7 7L9 9L11 6L13 12Z" fill="#2f6fba"/><circle cx="6" cy="5.5" r="1.3" fill="#2f6fba"/></svg>
<svg class="a" style="left:1630px;top:454px" width="16" height="16" viewBox="0 0 16 16"><path d="M4 12L7 9M9 7L12 4" stroke="#2f6fba" stroke-width="1"/><rect x="1" y="7" width="7" height="4.5" rx="2.2" transform="rotate(-45 4.5 9.25)" fill="none" stroke="#2f6fba" stroke-width="2"/><rect x="8" y="4.5" width="7" height="4.5" rx="2.2" transform="rotate(-45 11.5 6.75)" fill="none" stroke="#2f6fba" stroke-width="2"/></svg>
<svg class="a" style="left:1630px;top:486px" width="16" height="16" viewBox="0 0 16 16"><path d="M2 8H14" stroke="#a02020" stroke-width="1.4"/><path d="M1.5 4V12M14.5 4V12" stroke="#6b6b6b"/><path d="M2 8L5 6V10ZM14 8L11 6V10Z" fill="#a02020"/></svg>
<svg class="a" style="left:1630px;top:509px" width="16" height="16" viewBox="0 0 16 16"><path d="M4 12L12 4" stroke="#a02020" stroke-width="1.6"/><path d="M2 10L6 14M10 2L14 6" stroke="#6b6b6b" stroke-width="1.2"/><path d="M3 13L4 9L7 12ZM13 3L9 4L12 7Z" fill="#a02020"/></svg>
<svg class="a" style="left:1630px;top:533px" width="16" height="16" viewBox="0 0 16 16"><path d="M1 8H15" stroke="#a02020" stroke-width="1.4"/><path d="M1.5 5V11M6 5V11M10.5 5V11M15 5V11" stroke="#6b6b6b"/></svg>
<svg class="a" style="left:1630px;top:558px" width="16" height="16" viewBox="0 0 16 16"><path d="M1 8H15" stroke="#a02020" stroke-width="1.4"/><path d="M1.5 5V11M6 5V11M10.5 5V11M15 5V11" stroke="#6b6b6b"/></svg>
<svg class="a" style="left:1630px;top:582px" width="16" height="16" viewBox="0 0 16 16"><path d="M1 4H15M1 12H8" stroke="#a02020" stroke-width="1.6"/><path d="M1.5 1V15M15 1V15M8 9V15" stroke="#333" stroke-width="1.2"/></svg>
<svg class="a" style="left:1630px;top:607px" width="16" height="16" viewBox="0 0 16 16"><path d="M2 14L13 3M2 14H14" stroke="#333" stroke-width="1.2"/><path d="M9 5A8 8 0 0 1 13 12" fill="none" stroke="#a02020" stroke-width="1.2"/><path d="M12 11L13.5 13.5L15 11Z" fill="#a02020"/></svg>
<svg class="a" style="left:1630px;top:631px" width="16" height="16" viewBox="0 0 16 16"><circle cx="7" cy="9" r="5" fill="none" stroke="#555" stroke-width="2.4"/><circle cx="7" cy="9" r="1.3" fill="#a02020"/><path d="M10 6L14 2M14 2H11M14 2V5" stroke="#a02020" stroke-width="1.3" fill="none"/></svg>
<svg class="a" style="left:1630px;top:666px" width="16" height="16" viewBox="0 0 16 16"><path d="M1 11H15V13H1Z" fill="#999"/><path d="M4 11V8H12V11" fill="#bbb"/><path d="M8 8V4" stroke="#666" stroke-width="2"/><circle cx="6" cy="9" r="1" fill="#d42a2a"/></svg>
<svg class="a" style="left:1630px;top:697px" width="16" height="16" viewBox="0 0 16 16"><path d="M5 1V15M8 1V15M11 1V15" stroke="#2f6fba" stroke-width="1.6"/><path d="M2 6H14M2 10H14" stroke="#d42a2a" stroke-width="1.4"/></svg>
<svg class="a" style="left:1630px;top:721px" width="16" height="16" viewBox="0 0 16 16"><path d="M8 1V15" stroke="#2f6fba" stroke-width="1.8"/><ellipse cx="8" cy="8" rx="6" ry="3" fill="none" stroke="#d42a2a" stroke-width="2.2"/></svg>
<svg class="a" style="left:1630px;top:744px" width="16" height="16" viewBox="0 0 16 16"><path d="M8 1V15" stroke="#2f6fba" stroke-width="1.8"/><path d="M3 3L13 13" stroke="#d42a2a" stroke-width="2"/></svg>
<svg class="a" style="left:1630px;top:778px" width="16" height="16" viewBox="0 0 16 16"><path d="M6 2V14M6 8L11 14H15" fill="none" stroke="#2f6fba" stroke-width="2"/><path d="M2 1L12 10" stroke="#8a4fb0" stroke-width="1.8"/></svg>
<svg class="a" style="left:1630px;top:801px" width="16" height="16" viewBox="0 0 16 16"><path d="M8 1V5M1 9H15" stroke="#2f6fba" stroke-width="1.8"/><circle cx="8" cy="9" r="4.5" fill="none" stroke="#8a4fb0" stroke-width="2"/></svg>
<svg class="a" style="left:1658px;top:94px" width="16" height="16" viewBox="0 0 16 16"><rect x="1.5" y="1.5" width="13" height="12" fill="#fff" stroke="#6b6b6b"/><rect x="1.5" y="1" width="13" height="2.5" fill="#2f6fba"/><rect x="2.5" y="4" width="3" height="9" fill="#cfe3f5"/><path d="M6 7H7.5L8.5 12H14L15 8H8" fill="none" stroke="#2f6fba" stroke-width="1.4"/></svg>
<svg class="a" style="left:1658px;top:118px" width="16" height="16" viewBox="0 0 16 16"><rect x="1.5" y="1.5" width="13" height="12" fill="#fff" stroke="#6b6b6b"/><rect x="1.5" y="1" width="13" height="2.5" fill="#2f6fba"/><rect x="2.5" y="4" width="3" height="9" fill="#cfe3f5"/><path d="M6 7H7.5L8.5 12H14L15 8H8" fill="none" stroke="#2e9a5e" stroke-width="1.4"/></svg>
<svg class="a" style="left:1658px;top:150px" width="16" height="16" viewBox="0 0 16 16"><path d="M2 5H6A2 2 0 0 1 10 5H13V8A2 2 0 0 1 13 12V15H2V11A2 2 0 0 0 2 7Z" fill="#2e9a5e"/></svg>
<svg class="a" style="left:1658px;top:182px" width="16" height="16" viewBox="0 0 16 16"><path d="M2 2V6M7 2V6M12 2V6" stroke="#bbb" stroke-width="1.4"/><circle cx="3" cy="4" r="1.6" fill="#bbb"/><text x="0.5" y="15" font-size="7" font-weight="bold" fill="#aaa" font-family="Liberation Sans">123</text></svg>
<svg class="a" style="left:1658px;top:206px" width="16" height="16" viewBox="0 0 16 16"><circle cx="4.5" cy="4.5" r="3" fill="none" stroke="#bbb" stroke-width="1.8"/><circle cx="11.5" cy="4.5" r="3" fill="none" stroke="#bbb" stroke-width="1.8"/><text x="1" y="15" font-size="7" font-weight="bold" fill="#aaa" font-family="Liberation Sans">1 2</text></svg>
<svg class="a" style="left:1658px;top:230px" width="16" height="16" viewBox="0 0 16 16"><path d="M4 1V6M11 1V6M2 6H6M9 6H13" stroke="#aaa" stroke-width="1.6"/><text x="1" y="15" font-size="7" font-weight="bold" fill="#aaa" font-family="Liberation Sans">1 2</text></svg>
<svg class="a" style="left:1658px;top:262px" width="16" height="16" viewBox="0 0 16 16"><path d="M2 1V15M5 1V15" stroke="#a04040" stroke-width="1.4"/><path d="M9 10A4 4 0 0 1 15 8M15 10A4 4 0 0 1 9 12" fill="none" stroke="#2e9a5e" stroke-width="1.6"/></svg>
<svg class="a" style="left:1658px;top:293px" width="16" height="16" viewBox="0 0 16 16"><path d="M2 1V15" stroke="#444" stroke-width="1.6"/><path d="M4 1.5L12 6L4 10Z" fill="#2f6fba"/><circle cx="11.5" cy="11.5" r="3.8" fill="#2e9a5e"/><path d="M9.5 11.5L11 13L13.5 10.5" stroke="#fff" fill="none" stroke-width="1.2"/></svg>
<svg class="a" style="left:1658px;top:317px" width="16" height="16" viewBox="0 0 16 16"><path d="M2 1V15" stroke="#c0c0c0" stroke-width="1.6"/><path d="M4 1.5L12 6L4 10Z" fill="#c0c0c0"/><circle cx="12" cy="12" r="3" fill="#aaa"/></svg>
<svg class="a" style="left:1658px;top:342px" width="16" height="16" viewBox="0 0 16 16"><path d="M2 1V15" stroke="#c0c0c0" stroke-width="1.6"/><path d="M4 1.5L12 6L4 10Z" fill="#c0c0c0"/><path d="M7 12H13M11 10L13 12L11 14" stroke="#aaa" stroke-width="1.4" fill="none"/></svg>
<svg class="a" style="left:1658px;top:374px" width="16" height="16" viewBox="0 0 16 16"><path d="M2 1V15" stroke="#444" stroke-width="1.6"/><path d="M4 1.5L12 6L4 10Z" fill="#2f6fba"/><rect x="8.5" y="8.5" width="6" height="7" fill="#b04040"/><path d="M10 10h3" stroke="#fff"/></svg>
<svg class="a" style="left:1658px;top:396px" width="16" height="16" viewBox="0 0 16 16"><path d="M2 1V15" stroke="#444" stroke-width="1.6"/><path d="M4 1.5L12 6L4 10Z" fill="#2f6fba"/><path d="M1 10H9M6 7L9 10L6 13" stroke="#2e9a5e" stroke-width="1.6" fill="none"/></svg>
<svg class="a" style="left:1658px;top:429px" width="16" height="16" viewBox="0 0 16 16"><path d="M2 1V15" stroke="#444" stroke-width="1.6"/><path d="M4 1.5L12 6L4 10Z" fill="#2f6fba"/><path d="M9 9L14 14M14 9L9 14" stroke="#d42a2a" stroke-width="1.8"/></svg>
<svg class="a" style="left:1658px;top:598px" width="16" height="16" viewBox="0 0 16 16"><path d="M2 3H14M8 3V14" stroke="#444" stroke-width="2.2"/><rect x="1" y="2" width="2" height="2" fill="#d42a2a"/><rect x="13" y="2" width="2" height="2" fill="#d42a2a"/><rect x="7" y="13" width="2" height="2" fill="#d42a2a"/></svg>
<svg class="a" style="left:1658px;top:622px" width="16" height="16" viewBox="0 0 16 16"><path d="M2 8H14M8 2V14" stroke="#444" stroke-width="2.2"/><rect x="1" y="7" width="2" height="2" fill="#d42a2a"/><rect x="13" y="7" width="2" height="2" fill="#d42a2a"/><rect x="7" y="1" width="2" height="2" fill="#d42a2a"/><rect x="7" y="13" width="2" height="2" fill="#d42a2a"/></svg>
<svg class="a" style="left:1658px;top:654px" width="16" height="16" viewBox="0 0 16 16"><path d="M4 15V4H14" fill="none" stroke="#444" stroke-width="2.2"/><rect x="3" y="13" width="2" height="2" fill="#d42a2a"/><rect x="13" y="3" width="2" height="2" fill="#d42a2a"/></svg>
<svg class="a" style="left:1658px;top:677px" width="16" height="16" viewBox="0 0 16 16"><path d="M8 2V14" stroke="#444" stroke-width="2.2"/><rect x="7" y="1" width="2" height="2" fill="#d42a2a"/><rect x="7" y="13" width="2" height="2" fill="#d42a2a"/></svg>
<svg class="a" style="left:1658px;top:713px" width="16" height="16" viewBox="0 0 16 16"><rect x="1" y="1.5" width="5" height="13" fill="#2f6fba"/><rect x="2" y="3" width="3" height="2" fill="#cfe3f5"/><path d="M7.5 5.5h5l2 2v7h-7z" fill="#fff" stroke="#6b6b6b"/><path d="M9 9h4M9 11h4" stroke="#666"/></svg>
<svg class="a" style="left:1658px;top:737px" width="16" height="16" viewBox="0 0 16 16"><path d="M4 1v7M0.5 4.5h7M1.5 2l5 5M6.5 2l-5 5" stroke="#f0b400" stroke-width="1.2"/><path d="M4.5 4.5h7l3 3v8h-10z" fill="#fff" stroke="#6b6b6b"/></svg>
<svg class="a" style="left:1658px;top:760px" width="16" height="16" viewBox="0 0 16 16"><path d="M1.5 4.5h8v11h-8z" fill="#fff" stroke="#c0c0c0"/><circle cx="11.5" cy="4.5" r="3.8" fill="#b8b8b8"/><path d="M10 3l3 3M13 4v2h-2" stroke="#fff" fill="none"/></svg>
<svg class="a" style="left:1658px;top:785px" width="16" height="16" viewBox="0 0 16 16"><path d="M1.5 4.5h8v11h-8z" fill="#fff" stroke="#6b6b6b"/><circle cx="11.5" cy="4.5" r="3.8" fill="#8a4fb0"/><path d="M13 6L10 3M10 5V3H12" stroke="#fff" fill="none"/></svg>
<svg class="a" style="left:1658px;top:810px" width="16" height="16" viewBox="0 0 16 16"><path d="M4.5 1.5h7l3 3v10h-10z" fill="#fff" stroke="#6b6b6b"/><path d="M12 11H2M5 8L2 11L5 14" stroke="#2f6fba" stroke-width="1.8" fill="none"/></svg>
<svg class="a" style="left:1658px;top:834px" width="16" height="16" viewBox="0 0 16 16"><path d="M1.5 1.5h7l3 3v10h-10z" fill="#fff" stroke="#6b6b6b"/><path d="M4 11H14M11 8L14 11L11 14" stroke="#2f6fba" stroke-width="1.8" fill="none"/></svg>
<div class="a" style="left:1541px;top:80px;width:1px;height:900px;background:#b4b4b4"></div>
<div class="a" style="left:0;top:980px;width:1681px;height:27px;background:#f0f0f0;border-top:1px solid #e4e4e4"></div>
<div class="a" style="left:0;top:1006px;width:1681px;height:1px;background:#303030"></div>
<div class="a" style="left:49px;top:1006px;width:344px;height:1px;background:#c4c4c4"></div>
<div class="t" style="left:7px;top:987px;font-size:14px">RX: 70,24</div>
<div class="t" style="left:87px;top:987px;font-size:14px">RY: 22,39</div>
<div class="a" style="left:1252px;top:982px;width:1px;height:22px;background:#d0d0d0"></div>
<div class="a" style="left:1444px;top:982px;width:1px;height:22px;background:#d0d0d0"></div>
<div class="a" style="left:1555px;top:982px;width:1px;height:22px;background:#d0d0d0"></div>
<div class="a" style="left:1628px;top:982px;width:1px;height:22px;background:#d0d0d0"></div>
<div class="t" style="left:1257px;top:987px;font-size:14.4px;color:#6d6d6d">ON: 2,00 mm</div>
<div class="t" style="left:1449px;top:987px;font-size:14.4px;color:#6d6d6d">Logica 1:1</div>
<div class="t" style="left:1560px;top:987px;font-size:14.4px">#</div>
</body></html>
